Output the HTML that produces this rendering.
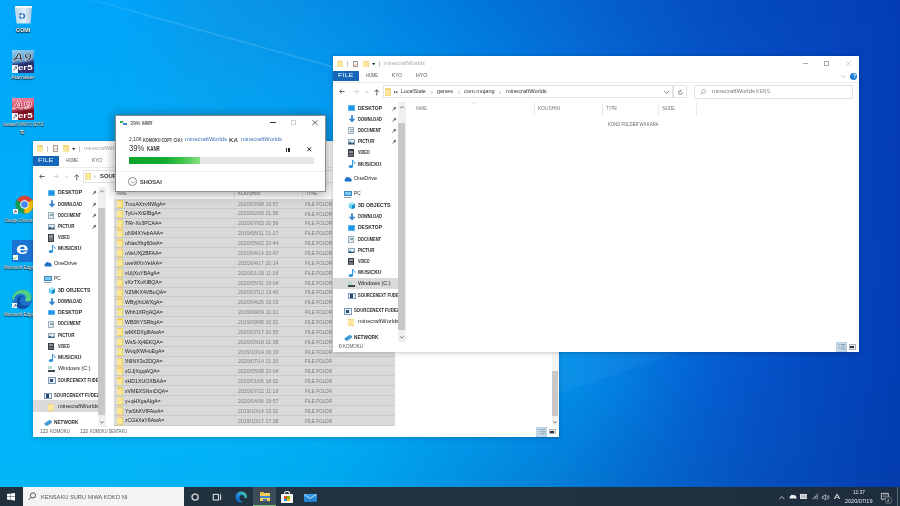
<!DOCTYPE html><html><head><meta charset="utf-8"><title>screen</title><style>
*{margin:0;padding:0;box-sizing:border-box}
html,body{width:900px;height:506px;overflow:hidden;background:#0a7fd8}
body{position:relative;font-family:"Liberation Sans",sans-serif}
.t{position:absolute;white-space:nowrap;line-height:1;transform-origin:0 50%}
.r{position:absolute}
.abs{position:absolute}
svg{position:absolute;overflow:visible}
</style></head><body><div class="abs" style="left:0;top:0;width:900px;height:506px;filter:blur(0.3px)">
<div class="abs" style="left:0;top:0;width:900px;height:506px;overflow:hidden"><div id="bgc" style="position:absolute;left:-50px;top:-44px;width:1000px;filter:blur(12px)"><div style="height:22px;background:linear-gradient(90deg,rgb(0,168,253) 0px,rgb(0,167,252) 25px,rgb(0,166,252) 50px,rgb(0,165,252) 75px,rgb(0,165,251) 100px,rgb(0,164,251) 125px,rgb(0,163,250) 150px,rgb(0,161,248) 175px,rgb(2,158,244) 200px,rgb(4,155,240) 225px,rgb(7,151,235) 250px,rgb(8,148,232) 275px,rgb(8,145,230) 300px,rgb(7,143,229) 325px,rgb(6,140,227) 350px,rgb(5,137,226) 375px,rgb(4,134,225) 400px,rgb(2,131,223) 425px,rgb(1,127,222) 450px,rgb(1,124,220) 475px,rgb(1,120,218) 500px,rgb(1,115,216) 525px,rgb(1,111,213) 550px,rgb(2,107,211) 575px,rgb(3,102,208) 600px,rgb(4,98,206) 625px,rgb(4,93,203) 650px,rgb(4,89,201) 675px,rgb(4,85,198) 700px,rgb(4,81,196) 725px,rgb(4,78,194) 750px,rgb(4,75,192) 775px,rgb(4,72,190) 800px,rgb(4,70,188) 825px,rgb(4,68,187) 850px,rgb(4,66,186) 875px,rgb(4,64,184) 900px,rgb(4,62,182) 925px,rgb(4,60,180) 950px,rgb(4,57,178) 975px,rgb(4,54,176) 1000px)"></div><div style="height:22px;background:linear-gradient(90deg,rgb(0,169,253) 0px,rgb(0,168,252) 25px,rgb(0,167,251) 50px,rgb(0,166,251) 75px,rgb(0,166,251) 100px,rgb(0,165,251) 125px,rgb(0,164,250) 150px,rgb(0,163,249) 175px,rgb(2,160,245) 200px,rgb(5,156,240) 225px,rgb(8,153,235) 250px,rgb(9,150,232) 275px,rgb(9,147,231) 300px,rgb(8,145,230) 325px,rgb(6,143,229) 350px,rgb(5,140,228) 375px,rgb(4,137,227) 400px,rgb(2,134,225) 425px,rgb(1,130,224) 450px,rgb(0,126,222) 475px,rgb(0,122,220) 500px,rgb(1,118,217) 525px,rgb(1,113,215) 550px,rgb(2,109,213) 575px,rgb(3,104,210) 600px,rgb(4,100,207) 625px,rgb(4,95,205) 650px,rgb(5,91,202) 675px,rgb(5,86,199) 700px,rgb(4,82,197) 725px,rgb(4,79,195) 750px,rgb(4,76,193) 775px,rgb(4,73,191) 800px,rgb(4,71,189) 825px,rgb(4,69,188) 850px,rgb(4,67,186) 875px,rgb(4,65,185) 900px,rgb(4,63,183) 925px,rgb(4,61,181) 950px,rgb(4,58,179) 975px,rgb(4,55,177) 1000px)"></div><div style="height:22px;background:linear-gradient(90deg,rgb(0,169,252) 0px,rgb(0,168,251) 25px,rgb(0,167,251) 50px,rgb(0,167,250) 75px,rgb(0,166,250) 100px,rgb(0,166,250) 125px,rgb(0,166,251) 150px,rgb(0,164,249) 175px,rgb(3,161,245) 200px,rgb(6,158,240) 225px,rgb(9,154,235) 250px,rgb(10,151,232) 275px,rgb(9,149,232) 300px,rgb(8,147,231) 325px,rgb(7,145,231) 350px,rgb(5,143,230) 375px,rgb(3,140,229) 400px,rgb(2,137,228) 425px,rgb(1,133,226) 450px,rgb(0,129,224) 475px,rgb(0,125,222) 500px,rgb(0,120,219) 525px,rgb(1,116,217) 550px,rgb(3,111,215) 575px,rgb(4,106,212) 600px,rgb(4,102,209) 625px,rgb(5,97,206) 650px,rgb(5,92,204) 675px,rgb(5,88,201) 700px,rgb(5,84,198) 725px,rgb(4,80,196) 750px,rgb(4,77,194) 775px,rgb(4,74,192) 800px,rgb(4,72,190) 825px,rgb(4,70,189) 850px,rgb(4,68,187) 875px,rgb(4,66,186) 900px,rgb(4,64,184) 925px,rgb(4,61,182) 950px,rgb(4,58,179) 975px,rgb(4,55,177) 1000px)"></div><div style="height:22px;background:linear-gradient(90deg,rgb(0,170,252) 0px,rgb(0,169,251) 25px,rgb(0,168,250) 50px,rgb(0,167,249) 75px,rgb(0,167,249) 100px,rgb(0,167,249) 125px,rgb(0,166,250) 150px,rgb(0,165,248) 175px,rgb(3,163,245) 200px,rgb(6,159,240) 225px,rgb(9,156,236) 250px,rgb(10,154,234) 275px,rgb(9,152,233) 300px,rgb(8,150,233) 325px,rgb(6,148,233) 350px,rgb(5,146,233) 375px,rgb(3,143,231) 400px,rgb(2,140,230) 425px,rgb(1,136,228) 450px,rgb(0,132,226) 475px,rgb(0,128,224) 500px,rgb(0,123,222) 525px,rgb(1,119,219) 550px,rgb(3,114,217) 575px,rgb(4,109,214) 600px,rgb(5,104,211) 625px,rgb(5,99,208) 650px,rgb(5,95,206) 675px,rgb(5,90,203) 700px,rgb(5,86,200) 725px,rgb(5,82,197) 750px,rgb(5,78,195) 775px,rgb(5,76,193) 800px,rgb(5,73,191) 825px,rgb(5,71,190) 850px,rgb(5,69,188) 875px,rgb(5,67,186) 900px,rgb(5,64,184) 925px,rgb(4,62,182) 950px,rgb(4,58,180) 975px,rgb(4,55,177) 1000px)"></div><div style="height:22px;background:linear-gradient(90deg,rgb(0,170,251) 0px,rgb(0,169,250) 25px,rgb(0,168,249) 50px,rgb(0,168,249) 75px,rgb(0,167,248) 100px,rgb(0,167,248) 125px,rgb(0,167,248) 150px,rgb(1,166,247) 175px,rgb(3,164,245) 200px,rgb(6,161,241) 225px,rgb(8,159,238) 250px,rgb(9,156,236) 275px,rgb(8,155,236) 300px,rgb(7,153,236) 325px,rgb(6,151,236) 350px,rgb(4,149,235) 375px,rgb(3,146,234) 400px,rgb(1,143,233) 425px,rgb(0,139,231) 450px,rgb(0,135,229) 475px,rgb(0,131,226) 500px,rgb(0,126,224) 525px,rgb(2,122,221) 550px,rgb(3,117,219) 575px,rgb(4,112,216) 600px,rgb(5,107,213) 625px,rgb(5,102,211) 650px,rgb(5,97,208) 675px,rgb(5,92,205) 700px,rgb(5,88,202) 725px,rgb(5,84,199) 750px,rgb(5,80,197) 775px,rgb(5,77,195) 800px,rgb(5,74,193) 825px,rgb(5,72,191) 850px,rgb(5,69,189) 875px,rgb(5,67,187) 900px,rgb(5,64,185) 925px,rgb(4,62,182) 950px,rgb(4,58,180) 975px,rgb(4,55,177) 1000px)"></div><div style="height:22px;background:linear-gradient(90deg,rgb(0,171,251) 0px,rgb(0,170,250) 25px,rgb(0,169,249) 50px,rgb(0,169,248) 75px,rgb(0,168,248) 100px,rgb(0,168,248) 125px,rgb(0,168,248) 150px,rgb(2,167,247) 175px,rgb(3,166,245) 200px,rgb(6,163,243) 225px,rgb(7,161,240) 250px,rgb(8,159,239) 275px,rgb(7,158,239) 300px,rgb(6,156,239) 325px,rgb(5,155,239) 350px,rgb(4,152,238) 375px,rgb(2,149,237) 400px,rgb(1,146,235) 425px,rgb(1,142,233) 450px,rgb(0,138,231) 475px,rgb(0,134,229) 500px,rgb(1,129,226) 525px,rgb(2,125,224) 550px,rgb(3,120,221) 575px,rgb(4,115,219) 600px,rgb(5,110,216) 625px,rgb(5,105,213) 650px,rgb(5,100,210) 675px,rgb(5,95,207) 700px,rgb(5,90,204) 725px,rgb(5,86,201) 750px,rgb(5,82,199) 775px,rgb(5,78,196) 800px,rgb(5,75,194) 825px,rgb(5,72,192) 850px,rgb(5,70,190) 875px,rgb(5,67,187) 900px,rgb(5,64,185) 925px,rgb(4,61,183) 950px,rgb(4,58,180) 975px,rgb(4,55,177) 1000px)"></div><div style="height:22px;background:linear-gradient(90deg,rgb(0,171,251) 0px,rgb(0,170,250) 25px,rgb(0,170,249) 50px,rgb(0,170,249) 75px,rgb(0,170,248) 100px,rgb(0,170,248) 125px,rgb(0,169,248) 150px,rgb(2,169,247) 175px,rgb(3,167,246) 200px,rgb(5,166,244) 225px,rgb(6,164,243) 250px,rgb(6,162,242) 275px,rgb(6,161,242) 300px,rgb(5,159,242) 325px,rgb(4,158,242) 350px,rgb(3,155,241) 375px,rgb(2,152,239) 400px,rgb(1,149,238) 425px,rgb(1,145,236) 450px,rgb(0,141,233) 475px,rgb(0,137,231) 500px,rgb(1,133,229) 525px,rgb(2,128,226) 550px,rgb(3,123,224) 575px,rgb(4,118,221) 600px,rgb(4,113,218) 625px,rgb(5,108,215) 650px,rgb(5,102,212) 675px,rgb(5,97,209) 700px,rgb(5,93,206) 725px,rgb(5,88,203) 750px,rgb(5,84,200) 775px,rgb(5,80,198) 800px,rgb(5,76,195) 825px,rgb(5,73,193) 850px,rgb(5,70,190) 875px,rgb(5,67,188) 900px,rgb(5,64,185) 925px,rgb(4,61,183) 950px,rgb(4,58,180) 975px,rgb(4,55,177) 1000px)"></div><div style="height:22px;background:linear-gradient(90deg,rgb(0,172,250) 0px,rgb(0,171,250) 25px,rgb(0,171,249) 50px,rgb(0,171,249) 75px,rgb(0,171,249) 100px,rgb(0,171,249) 125px,rgb(0,171,249) 150px,rgb(1,170,248) 175px,rgb(3,169,247) 200px,rgb(4,168,246) 225px,rgb(5,166,245) 250px,rgb(5,165,244) 275px,rgb(5,164,244) 300px,rgb(4,162,244) 325px,rgb(3,160,244) 350px,rgb(3,158,243) 375px,rgb(2,155,242) 400px,rgb(1,152,240) 425px,rgb(1,148,238) 450px,rgb(0,144,236) 475px,rgb(1,140,234) 500px,rgb(1,136,231) 525px,rgb(2,131,229) 550px,rgb(3,126,226) 575px,rgb(3,121,223) 600px,rgb(4,116,221) 625px,rgb(5,111,218) 650px,rgb(5,105,214) 675px,rgb(5,100,211) 700px,rgb(5,95,208) 725px,rgb(5,90,205) 750px,rgb(5,86,202) 775px,rgb(5,81,199) 800px,rgb(5,77,196) 825px,rgb(5,74,194) 850px,rgb(5,70,191) 875px,rgb(5,67,188) 900px,rgb(4,64,185) 925px,rgb(4,61,183) 950px,rgb(4,58,180) 975px,rgb(4,55,177) 1000px)"></div><div style="height:22px;background:linear-gradient(90deg,rgb(0,173,250) 0px,rgb(0,172,250) 25px,rgb(0,172,250) 50px,rgb(0,172,250) 75px,rgb(0,172,250) 100px,rgb(0,172,250) 125px,rgb(0,172,250) 150px,rgb(1,172,249) 175px,rgb(2,171,248) 200px,rgb(3,170,247) 225px,rgb(4,168,247) 250px,rgb(4,167,246) 275px,rgb(4,166,246) 300px,rgb(4,165,246) 325px,rgb(3,163,245) 350px,rgb(2,160,245) 375px,rgb(2,158,243) 400px,rgb(1,155,242) 425px,rgb(1,151,240) 450px,rgb(1,147,238) 475px,rgb(1,143,236) 500px,rgb(1,139,233) 525px,rgb(2,134,231) 550px,rgb(2,130,229) 575px,rgb(3,124,226) 600px,rgb(4,119,223) 625px,rgb(4,114,220) 650px,rgb(5,108,217) 675px,rgb(5,103,214) 700px,rgb(5,97,210) 725px,rgb(5,92,207) 750px,rgb(5,87,204) 775px,rgb(5,83,201) 800px,rgb(5,79,197) 825px,rgb(5,74,194) 850px,rgb(5,71,191) 875px,rgb(5,67,188) 900px,rgb(4,64,185) 925px,rgb(4,60,183) 950px,rgb(4,57,180) 975px,rgb(4,54,177) 1000px)"></div><div style="height:22px;background:linear-gradient(90deg,rgb(0,173,251) 0px,rgb(0,173,250) 25px,rgb(0,173,250) 50px,rgb(0,173,250) 75px,rgb(0,173,250) 100px,rgb(0,173,250) 125px,rgb(0,173,250) 150px,rgb(1,173,250) 175px,rgb(2,172,249) 200px,rgb(3,171,248) 225px,rgb(3,170,248) 250px,rgb(3,169,248) 275px,rgb(3,168,247) 300px,rgb(3,167,247) 325px,rgb(2,165,247) 350px,rgb(2,163,246) 375px,rgb(1,160,245) 400px,rgb(1,157,243) 425px,rgb(1,154,242) 450px,rgb(1,150,240) 475px,rgb(1,146,238) 500px,rgb(1,142,236) 525px,rgb(2,138,233) 550px,rgb(2,133,231) 575px,rgb(3,128,228) 600px,rgb(4,122,225) 625px,rgb(4,117,222) 650px,rgb(4,111,219) 675px,rgb(5,105,216) 700px,rgb(5,100,212) 725px,rgb(5,94,209) 750px,rgb(5,89,205) 775px,rgb(5,84,202) 800px,rgb(5,79,199) 825px,rgb(5,75,195) 850px,rgb(5,71,192) 875px,rgb(5,67,189) 900px,rgb(5,64,186) 925px,rgb(4,60,183) 950px,rgb(4,57,180) 975px,rgb(4,54,177) 1000px)"></div><div style="height:22px;background:linear-gradient(90deg,rgb(0,174,251) 0px,rgb(0,174,250) 25px,rgb(0,174,250) 50px,rgb(0,174,250) 75px,rgb(0,174,250) 100px,rgb(0,174,250) 125px,rgb(0,174,250) 150px,rgb(1,174,250) 175px,rgb(1,174,250) 200px,rgb(2,173,249) 225px,rgb(2,172,249) 250px,rgb(3,171,249) 275px,rgb(3,170,249) 300px,rgb(2,169,248) 325px,rgb(2,167,248) 350px,rgb(1,165,247) 375px,rgb(1,162,246) 400px,rgb(1,160,245) 425px,rgb(1,156,243) 450px,rgb(1,153,241) 475px,rgb(1,149,239) 500px,rgb(1,145,237) 525px,rgb(2,141,235) 550px,rgb(2,136,233) 575px,rgb(3,131,230) 600px,rgb(3,126,227) 625px,rgb(4,120,224) 650px,rgb(4,114,221) 675px,rgb(4,108,218) 700px,rgb(5,102,214) 725px,rgb(5,96,210) 750px,rgb(5,91,207) 775px,rgb(5,85,203) 800px,rgb(5,80,200) 825px,rgb(5,76,196) 850px,rgb(5,72,192) 875px,rgb(5,67,189) 900px,rgb(5,64,186) 925px,rgb(4,60,183) 950px,rgb(4,57,180) 975px,rgb(4,54,177) 1000px)"></div><div style="height:22px;background:linear-gradient(90deg,rgb(0,175,251) 0px,rgb(0,175,250) 25px,rgb(0,175,250) 50px,rgb(0,175,250) 75px,rgb(0,175,250) 100px,rgb(0,175,251) 125px,rgb(0,175,251) 150px,rgb(1,175,251) 175px,rgb(1,175,250) 200px,rgb(2,174,250) 225px,rgb(2,174,250) 250px,rgb(2,173,250) 275px,rgb(2,172,249) 300px,rgb(2,170,249) 325px,rgb(1,169,249) 350px,rgb(1,167,248) 375px,rgb(1,164,247) 400px,rgb(1,162,246) 425px,rgb(1,159,244) 450px,rgb(1,155,243) 475px,rgb(1,152,241) 500px,rgb(1,148,239) 525px,rgb(2,144,237) 550px,rgb(2,139,235) 575px,rgb(3,134,232) 600px,rgb(3,129,229) 625px,rgb(4,123,226) 650px,rgb(4,117,223) 675px,rgb(4,110,219) 700px,rgb(5,104,216) 725px,rgb(5,98,212) 750px,rgb(5,92,208) 775px,rgb(5,86,204) 800px,rgb(5,81,200) 825px,rgb(5,76,197) 850px,rgb(5,72,193) 875px,rgb(5,68,189) 900px,rgb(5,64,186) 925px,rgb(4,61,183) 950px,rgb(4,57,180) 975px,rgb(4,54,177) 1000px)"></div><div style="height:22px;background:linear-gradient(90deg,rgb(0,176,251) 0px,rgb(0,176,251) 25px,rgb(0,176,250) 50px,rgb(0,176,250) 75px,rgb(0,176,251) 100px,rgb(0,176,251) 125px,rgb(0,176,251) 150px,rgb(1,176,251) 175px,rgb(1,176,251) 200px,rgb(1,176,251) 225px,rgb(1,175,250) 250px,rgb(2,174,250) 275px,rgb(2,173,250) 300px,rgb(1,172,250) 325px,rgb(1,170,249) 350px,rgb(1,168,248) 375px,rgb(1,166,248) 400px,rgb(0,164,246) 425px,rgb(0,161,245) 450px,rgb(1,158,244) 475px,rgb(1,154,242) 500px,rgb(1,150,240) 525px,rgb(1,146,238) 550px,rgb(2,142,236) 575px,rgb(2,137,234) 600px,rgb(3,131,231) 625px,rgb(3,125,228) 650px,rgb(4,119,225) 675px,rgb(4,112,221) 700px,rgb(4,106,217) 725px,rgb(5,99,213) 750px,rgb(5,93,209) 775px,rgb(5,87,205) 800px,rgb(5,82,201) 825px,rgb(5,77,197) 850px,rgb(5,72,193) 875px,rgb(5,68,190) 900px,rgb(5,64,186) 925px,rgb(4,61,183) 950px,rgb(4,57,179) 975px,rgb(4,54,176) 1000px)"></div><div style="height:22px;background:linear-gradient(90deg,rgb(0,177,251) 0px,rgb(0,177,251) 25px,rgb(0,177,250) 50px,rgb(0,177,250) 75px,rgb(0,177,251) 100px,rgb(0,177,251) 125px,rgb(0,177,251) 150px,rgb(0,177,251) 175px,rgb(1,177,251) 200px,rgb(1,177,251) 225px,rgb(1,176,251) 250px,rgb(1,175,251) 275px,rgb(1,174,250) 300px,rgb(1,173,250) 325px,rgb(1,172,249) 350px,rgb(1,170,249) 375px,rgb(0,168,248) 400px,rgb(0,165,247) 425px,rgb(0,163,246) 450px,rgb(0,160,244) 475px,rgb(1,156,243) 500px,rgb(1,153,241) 525px,rgb(1,149,240) 550px,rgb(2,144,238) 575px,rgb(2,140,235) 600px,rgb(3,134,233) 625px,rgb(3,128,230) 650px,rgb(4,121,226) 675px,rgb(4,114,222) 700px,rgb(4,107,218) 725px,rgb(5,100,214) 750px,rgb(5,94,210) 775px,rgb(5,88,206) 800px,rgb(5,82,202) 825px,rgb(5,77,197) 850px,rgb(5,73,193) 875px,rgb(5,69,190) 900px,rgb(5,65,186) 925px,rgb(4,61,183) 950px,rgb(4,58,179) 975px,rgb(4,54,176) 1000px)"></div><div style="height:22px;background:linear-gradient(90deg,rgb(0,178,251) 0px,rgb(0,178,250) 25px,rgb(0,177,250) 50px,rgb(0,177,250) 75px,rgb(0,177,250) 100px,rgb(0,178,251) 125px,rgb(0,178,251) 150px,rgb(0,178,251) 175px,rgb(1,178,251) 200px,rgb(1,177,251) 225px,rgb(1,177,251) 250px,rgb(1,176,251) 275px,rgb(1,175,250) 300px,rgb(1,174,250) 325px,rgb(1,173,250) 350px,rgb(0,171,249) 375px,rgb(0,169,248) 400px,rgb(0,167,247) 425px,rgb(0,164,246) 450px,rgb(0,161,245) 475px,rgb(1,158,243) 500px,rgb(1,154,242) 525px,rgb(1,151,240) 550px,rgb(2,147,238) 575px,rgb(2,142,236) 600px,rgb(3,136,234) 625px,rgb(3,130,231) 650px,rgb(3,123,227) 675px,rgb(4,116,223) 700px,rgb(4,108,219) 725px,rgb(4,101,215) 750px,rgb(5,94,210) 775px,rgb(5,88,206) 800px,rgb(5,82,202) 825px,rgb(5,77,198) 850px,rgb(5,73,193) 875px,rgb(5,69,190) 900px,rgb(5,65,186) 925px,rgb(4,61,182) 950px,rgb(4,58,179) 975px,rgb(4,54,176) 1000px)"></div><div style="height:22px;background:linear-gradient(90deg,rgb(0,179,251) 0px,rgb(0,178,250) 25px,rgb(0,178,250) 50px,rgb(0,178,250) 75px,rgb(0,178,250) 100px,rgb(0,178,250) 125px,rgb(0,178,251) 150px,rgb(0,178,251) 175px,rgb(1,178,251) 200px,rgb(1,178,251) 225px,rgb(1,178,251) 250px,rgb(1,177,251) 275px,rgb(1,176,250) 300px,rgb(1,175,250) 325px,rgb(0,174,249) 350px,rgb(0,172,249) 375px,rgb(0,170,248) 400px,rgb(0,168,247) 425px,rgb(0,165,246) 450px,rgb(0,162,245) 475px,rgb(0,159,243) 500px,rgb(1,156,242) 525px,rgb(1,152,241) 550px,rgb(2,148,239) 575px,rgb(2,144,237) 600px,rgb(2,138,234) 625px,rgb(3,132,231) 650px,rgb(3,125,228) 675px,rgb(4,117,224) 700px,rgb(4,109,219) 725px,rgb(4,101,215) 750px,rgb(5,94,210) 775px,rgb(5,88,206) 800px,rgb(5,82,202) 825px,rgb(5,77,197) 850px,rgb(5,73,193) 875px,rgb(4,69,189) 900px,rgb(4,65,185) 925px,rgb(4,61,182) 950px,rgb(4,58,178) 975px,rgb(3,54,175) 1000px)"></div><div style="height:22px;background:linear-gradient(90deg,rgb(0,179,250) 0px,rgb(0,179,250) 25px,rgb(0,179,250) 50px,rgb(0,179,250) 75px,rgb(0,179,250) 100px,rgb(0,179,250) 125px,rgb(0,179,250) 150px,rgb(1,179,251) 175px,rgb(1,179,251) 200px,rgb(1,179,251) 225px,rgb(1,178,251) 250px,rgb(1,178,250) 275px,rgb(1,177,250) 300px,rgb(0,176,250) 325px,rgb(0,174,249) 350px,rgb(0,173,248) 375px,rgb(0,171,247) 400px,rgb(0,168,246) 425px,rgb(0,166,245) 450px,rgb(0,163,244) 475px,rgb(0,160,243) 500px,rgb(1,156,242) 525px,rgb(1,153,240) 550px,rgb(1,149,239) 575px,rgb(2,145,237) 600px,rgb(2,140,235) 625px,rgb(3,133,231) 650px,rgb(3,126,228) 675px,rgb(4,117,224) 700px,rgb(4,109,219) 725px,rgb(4,101,215) 750px,rgb(5,94,210) 775px,rgb(5,87,206) 800px,rgb(5,82,201) 825px,rgb(5,77,197) 850px,rgb(4,73,193) 875px,rgb(4,69,189) 900px,rgb(4,65,185) 925px,rgb(4,61,181) 950px,rgb(3,58,178) 975px,rgb(3,54,174) 1000px)"></div><div style="height:22px;background:linear-gradient(90deg,rgb(0,180,250) 0px,rgb(0,180,250) 25px,rgb(0,179,250) 50px,rgb(0,179,250) 75px,rgb(0,179,250) 100px,rgb(0,179,250) 125px,rgb(0,179,250) 150px,rgb(1,179,250) 175px,rgb(1,179,250) 200px,rgb(1,179,250) 225px,rgb(1,179,250) 250px,rgb(1,178,250) 275px,rgb(1,177,250) 300px,rgb(0,176,249) 325px,rgb(0,175,248) 350px,rgb(0,173,248) 375px,rgb(0,171,247) 400px,rgb(0,168,246) 425px,rgb(0,166,245) 450px,rgb(0,163,243) 475px,rgb(0,160,242) 500px,rgb(1,156,241) 525px,rgb(1,153,240) 550px,rgb(1,150,238) 575px,rgb(2,146,236) 600px,rgb(2,141,234) 625px,rgb(3,134,231) 650px,rgb(3,126,227) 675px,rgb(4,117,223) 700px,rgb(4,108,218) 725px,rgb(4,100,214) 750px,rgb(5,93,209) 775px,rgb(5,87,205) 800px,rgb(5,81,200) 825px,rgb(5,77,196) 850px,rgb(4,73,192) 875px,rgb(4,69,188) 900px,rgb(4,65,184) 925px,rgb(3,61,181) 950px,rgb(3,58,177) 975px,rgb(3,54,174) 1000px)"></div><div style="height:22px;background:linear-gradient(90deg,rgb(0,181,250) 0px,rgb(0,180,250) 25px,rgb(0,180,249) 50px,rgb(0,180,249) 75px,rgb(0,180,249) 100px,rgb(0,180,250) 125px,rgb(1,180,250) 150px,rgb(1,180,250) 175px,rgb(1,180,250) 200px,rgb(1,179,250) 225px,rgb(1,179,250) 250px,rgb(1,179,249) 275px,rgb(1,178,249) 300px,rgb(0,177,248) 325px,rgb(0,175,247) 350px,rgb(0,173,247) 375px,rgb(0,171,246) 400px,rgb(0,168,245) 425px,rgb(0,165,243) 450px,rgb(0,162,242) 475px,rgb(0,159,241) 500px,rgb(1,156,239) 525px,rgb(1,152,238) 550px,rgb(1,149,237) 575px,rgb(2,145,235) 600px,rgb(2,141,233) 625px,rgb(3,134,230) 650px,rgb(3,126,226) 675px,rgb(4,116,221) 700px,rgb(4,107,217) 725px,rgb(4,98,212) 750px,rgb(5,91,208) 775px,rgb(5,86,203) 800px,rgb(5,81,199) 825px,rgb(4,76,195) 850px,rgb(4,72,191) 875px,rgb(4,69,187) 900px,rgb(3,65,183) 925px,rgb(3,62,180) 950px,rgb(3,58,176) 975px,rgb(2,54,173) 1000px)"></div><div style="height:22px;background:linear-gradient(90deg,rgb(0,181,250) 0px,rgb(0,181,250) 25px,rgb(0,180,249) 50px,rgb(0,180,249) 75px,rgb(0,180,249) 100px,rgb(1,180,249) 125px,rgb(1,180,249) 150px,rgb(1,180,249) 175px,rgb(1,180,249) 200px,rgb(1,180,249) 225px,rgb(1,179,249) 250px,rgb(1,179,249) 275px,rgb(1,178,248) 300px,rgb(0,177,247) 325px,rgb(0,175,246) 350px,rgb(0,173,245) 375px,rgb(0,171,244) 400px,rgb(0,168,243) 425px,rgb(0,164,242) 450px,rgb(0,161,241) 475px,rgb(0,157,239) 500px,rgb(1,154,238) 525px,rgb(1,151,236) 550px,rgb(2,147,234) 575px,rgb(2,143,232) 600px,rgb(2,139,230) 625px,rgb(3,132,227) 650px,rgb(3,124,223) 675px,rgb(4,114,218) 700px,rgb(4,105,214) 725px,rgb(4,97,210) 750px,rgb(5,90,206) 775px,rgb(5,85,201) 800px,rgb(5,80,197) 825px,rgb(4,76,193) 850px,rgb(4,72,189) 875px,rgb(3,69,186) 900px,rgb(3,65,182) 925px,rgb(3,61,179) 950px,rgb(2,58,175) 975px,rgb(2,54,172) 1000px)"></div><div style="height:22px;background:linear-gradient(90deg,rgb(0,182,250) 0px,rgb(0,181,249) 25px,rgb(0,181,249) 50px,rgb(1,181,249) 75px,rgb(1,180,249) 100px,rgb(1,180,249) 125px,rgb(2,180,249) 150px,rgb(2,180,249) 175px,rgb(2,180,249) 200px,rgb(2,179,249) 225px,rgb(2,179,248) 250px,rgb(1,178,248) 275px,rgb(1,178,247) 300px,rgb(0,176,246) 325px,rgb(0,175,245) 350px,rgb(0,173,244) 375px,rgb(0,170,243) 400px,rgb(0,167,242) 425px,rgb(0,163,240) 450px,rgb(0,159,239) 475px,rgb(1,155,237) 500px,rgb(1,152,235) 525px,rgb(1,148,233) 550px,rgb(2,144,231) 575px,rgb(2,140,229) 600px,rgb(2,135,226) 625px,rgb(3,129,223) 650px,rgb(3,120,219) 675px,rgb(4,112,215) 700px,rgb(4,103,211) 725px,rgb(4,95,207) 750px,rgb(5,89,203) 775px,rgb(5,84,199) 800px,rgb(5,80,195) 825px,rgb(4,76,191) 850px,rgb(4,72,188) 875px,rgb(3,68,184) 900px,rgb(3,65,181) 925px,rgb(2,61,177) 950px,rgb(2,58,174) 975px,rgb(2,54,171) 1000px)"></div><div style="height:22px;background:linear-gradient(90deg,rgb(0,182,249) 0px,rgb(0,182,249) 25px,rgb(1,181,249) 50px,rgb(1,181,249) 75px,rgb(1,181,248) 100px,rgb(2,181,248) 125px,rgb(2,180,248) 150px,rgb(2,180,248) 175px,rgb(2,180,248) 200px,rgb(2,179,248) 225px,rgb(2,179,248) 250px,rgb(2,178,247) 275px,rgb(1,177,246) 300px,rgb(0,176,245) 325px,rgb(0,174,244) 350px,rgb(0,172,243) 375px,rgb(0,169,241) 400px,rgb(0,166,240) 425px,rgb(0,162,238) 450px,rgb(0,157,236) 475px,rgb(1,153,235) 500px,rgb(1,149,233) 525px,rgb(1,145,230) 550px,rgb(2,141,228) 575px,rgb(2,136,225) 600px,rgb(3,131,222) 625px,rgb(3,124,219) 650px,rgb(3,117,215) 675px,rgb(4,109,211) 700px,rgb(4,101,208) 725px,rgb(4,94,204) 750px,rgb(5,88,200) 775px,rgb(5,83,197) 800px,rgb(5,79,193) 825px,rgb(5,75,189) 850px,rgb(4,72,186) 875px,rgb(3,68,183) 900px,rgb(3,65,179) 925px,rgb(2,61,176) 950px,rgb(2,58,173) 975px,rgb(2,54,170) 1000px)"></div><div style="height:22px;background:linear-gradient(90deg,rgb(1,183,249) 0px,rgb(1,182,249) 25px,rgb(1,182,248) 50px,rgb(2,181,248) 75px,rgb(2,181,248) 100px,rgb(2,181,248) 125px,rgb(2,180,248) 150px,rgb(3,180,248) 175px,rgb(3,179,247) 200px,rgb(3,179,247) 225px,rgb(2,178,247) 250px,rgb(2,177,246) 275px,rgb(1,176,245) 300px,rgb(1,175,244) 325px,rgb(0,173,242) 350px,rgb(0,171,241) 375px,rgb(0,168,239) 400px,rgb(0,164,238) 425px,rgb(0,160,236) 450px,rgb(0,155,234) 475px,rgb(1,150,232) 500px,rgb(1,146,230) 525px,rgb(2,142,227) 550px,rgb(2,137,225) 575px,rgb(2,133,222) 600px,rgb(3,127,218) 625px,rgb(3,120,214) 650px,rgb(3,113,210) 675px,rgb(4,106,207) 700px,rgb(4,99,204) 725px,rgb(5,93,201) 750px,rgb(5,88,198) 775px,rgb(5,83,194) 800px,rgb(5,79,191) 825px,rgb(5,75,187) 850px,rgb(4,71,184) 875px,rgb(3,68,181) 900px,rgb(3,64,178) 925px,rgb(2,61,175) 950px,rgb(2,57,171) 975px,rgb(2,54,168) 1000px)"></div><div style="height:22px;background:linear-gradient(90deg,rgb(1,183,249) 0px,rgb(1,183,248) 25px,rgb(2,182,248) 50px,rgb(2,182,248) 75px,rgb(2,181,247) 100px,rgb(3,181,247) 125px,rgb(3,180,247) 150px,rgb(3,180,247) 175px,rgb(3,179,246) 200px,rgb(3,178,246) 225px,rgb(3,178,245) 250px,rgb(2,177,245) 275px,rgb(1,175,243) 300px,rgb(1,174,242) 325px,rgb(0,172,241) 350px,rgb(0,170,239) 375px,rgb(0,166,237) 400px,rgb(0,162,236) 425px,rgb(0,158,234) 450px,rgb(1,153,232) 475px,rgb(1,148,229) 500px,rgb(2,143,227) 525px,rgb(2,138,224) 550px,rgb(2,134,221) 575px,rgb(3,129,218) 600px,rgb(3,123,215) 625px,rgb(3,117,211) 650px,rgb(4,110,207) 675px,rgb(4,104,204) 700px,rgb(4,98,201) 725px,rgb(5,92,198) 750px,rgb(5,87,195) 775px,rgb(5,82,192) 800px,rgb(5,78,189) 825px,rgb(4,74,185) 850px,rgb(4,71,182) 875px,rgb(4,67,179) 900px,rgb(3,64,176) 925px,rgb(3,60,173) 950px,rgb(2,57,170) 975px,rgb(2,53,167) 1000px)"></div><div style="height:22px;background:linear-gradient(90deg,rgb(1,184,248) 0px,rgb(2,183,248) 25px,rgb(2,182,247) 50px,rgb(2,182,247) 75px,rgb(3,181,247) 100px,rgb(3,180,246) 125px,rgb(3,180,246) 150px,rgb(3,179,246) 175px,rgb(3,178,245) 200px,rgb(3,178,245) 225px,rgb(3,177,244) 250px,rgb(2,176,243) 275px,rgb(2,174,242) 300px,rgb(1,173,240) 325px,rgb(1,171,239) 350px,rgb(0,168,237) 375px,rgb(0,164,235) 400px,rgb(0,160,233) 425px,rgb(0,156,231) 450px,rgb(1,151,229) 475px,rgb(1,145,227) 500px,rgb(2,140,224) 525px,rgb(2,136,221) 550px,rgb(2,131,218) 575px,rgb(3,126,215) 600px,rgb(3,120,211) 625px,rgb(3,114,208) 650px,rgb(4,108,204) 675px,rgb(4,102,201) 700px,rgb(4,96,198) 725px,rgb(4,91,195) 750px,rgb(5,86,192) 775px,rgb(5,82,189) 800px,rgb(5,78,186) 825px,rgb(4,74,183) 850px,rgb(4,70,180) 875px,rgb(4,67,177) 900px,rgb(3,63,174) 925px,rgb(3,60,171) 950px,rgb(2,56,169) 975px,rgb(2,53,166) 1000px)"></div><div style="height:22px;background:linear-gradient(90deg,rgb(2,184,248) 0px,rgb(2,183,247) 25px,rgb(2,182,247) 50px,rgb(3,182,246) 75px,rgb(3,181,246) 100px,rgb(3,180,246) 125px,rgb(3,180,245) 150px,rgb(3,179,245) 175px,rgb(3,178,244) 200px,rgb(3,177,243) 225px,rgb(3,176,243) 250px,rgb(2,174,242) 275px,rgb(2,173,240) 300px,rgb(1,171,239) 325px,rgb(1,169,237) 350px,rgb(1,166,235) 375px,rgb(0,162,233) 400px,rgb(1,158,231) 425px,rgb(1,153,229) 450px,rgb(1,149,227) 475px,rgb(2,143,224) 500px,rgb(2,138,221) 525px,rgb(2,133,219) 550px,rgb(3,128,215) 575px,rgb(3,123,212) 600px,rgb(3,118,208) 625px,rgb(3,112,205) 650px,rgb(4,106,201) 675px,rgb(4,101,198) 700px,rgb(4,95,195) 725px,rgb(4,90,193) 750px,rgb(5,85,190) 775px,rgb(5,81,187) 800px,rgb(5,77,184) 825px,rgb(4,73,181) 850px,rgb(4,70,178) 875px,rgb(4,66,176) 900px,rgb(3,63,173) 925px,rgb(3,59,170) 950px,rgb(2,56,167) 975px,rgb(2,53,164) 1000px)"></div><div style="height:22px;background:linear-gradient(90deg,rgb(2,184,247) 0px,rgb(2,183,247) 25px,rgb(3,182,246) 50px,rgb(3,182,246) 75px,rgb(3,181,245) 100px,rgb(3,180,245) 125px,rgb(3,179,244) 150px,rgb(4,178,243) 175px,rgb(3,177,243) 200px,rgb(3,176,242) 225px,rgb(3,175,241) 250px,rgb(3,173,240) 275px,rgb(2,171,239) 300px,rgb(2,169,237) 325px,rgb(1,167,235) 350px,rgb(1,164,233) 375px,rgb(1,160,231) 400px,rgb(1,156,229) 425px,rgb(1,151,227) 450px,rgb(1,147,224) 475px,rgb(2,141,222) 500px,rgb(2,136,219) 525px,rgb(2,131,216) 550px,rgb(3,126,213) 575px,rgb(3,121,209) 600px,rgb(3,116,206) 625px,rgb(4,110,203) 650px,rgb(4,105,199) 675px,rgb(4,99,196) 700px,rgb(4,94,193) 725px,rgb(4,89,190) 750px,rgb(5,85,188) 775px,rgb(5,81,185) 800px,rgb(4,77,182) 825px,rgb(4,73,179) 850px,rgb(4,69,177) 875px,rgb(4,66,174) 900px,rgb(3,62,171) 925px,rgb(3,59,168) 950px,rgb(3,55,166) 975px,rgb(2,52,163) 1000px)"></div><div style="height:22px;background:linear-gradient(90deg,rgb(2,184,246) 0px,rgb(3,183,246) 25px,rgb(3,182,245) 50px,rgb(3,181,245) 75px,rgb(3,180,244) 100px,rgb(3,179,244) 125px,rgb(4,178,243) 150px,rgb(4,177,242) 175px,rgb(4,176,241) 200px,rgb(3,175,241) 225px,rgb(3,173,239) 250px,rgb(3,172,238) 275px,rgb(2,170,237) 300px,rgb(2,168,235) 325px,rgb(2,165,233) 350px,rgb(1,162,231) 375px,rgb(1,158,229) 400px,rgb(1,154,227) 425px,rgb(1,149,225) 450px,rgb(2,145,222) 475px,rgb(2,140,219) 500px,rgb(2,135,217) 525px,rgb(3,130,213) 550px,rgb(3,124,210) 575px,rgb(3,119,207) 600px,rgb(3,114,204) 625px,rgb(4,109,200) 650px,rgb(4,103,197) 675px,rgb(4,98,194) 700px,rgb(4,93,191) 725px,rgb(4,89,188) 750px,rgb(4,84,186) 775px,rgb(4,80,183) 800px,rgb(4,76,180) 825px,rgb(4,72,178) 850px,rgb(4,69,175) 875px,rgb(4,65,172) 900px,rgb(3,62,170) 925px,rgb(3,58,167) 950px,rgb(3,55,164) 975px,rgb(2,52,162) 1000px)"></div></div>
<div class="abs" style="left:0;top:0;width:900px;height:506px;background:linear-gradient(164.4deg,rgba(255,255,255,0) 0,rgba(255,255,255,0) 0)"></div>
<svg style="left:0.00px;top:0.00px" width="900" height="506" viewBox="0 0 900 506"><defs><linearGradient id="lb" x1="0" y1="0" x2="1" y2="0"><stop offset="0" stop-color="#fff" stop-opacity="0"/><stop offset="0.25" stop-color="#fff" stop-opacity="0.10"/><stop offset="1" stop-color="#fff" stop-opacity="0.14"/></linearGradient></defs><path d="M60 -9 L333 67" stroke="url(#lb)" stroke-width="1.6" fill="none"/><path d="M540 353 L690 353 L690 349 L540 400 Z" fill="#ffffff" fill-opacity="0.04"/></svg>
</div>
<div class="r" style="left:14.50px;top:5.50px;width:17.50px;height:18.00px;background:linear-gradient(90deg,rgba(205,220,232,.9),rgba(240,245,250,.92) 55%,rgba(190,205,218,.9));clip-path:polygon(0 4%,100% 0,92% 100%,12% 100%)"></div>
<div class="r" style="left:14.80px;top:5.50px;width:17.00px;height:2.20px;background:rgba(250,252,255,.9);border-radius:1px"></div>
<svg style="left:17.80px;top:11.50px" width="8" height="8" viewBox="0 0 8 8"><circle cx="4" cy="4" r="2.5" stroke="#2a70c4" stroke-width="1.5" fill="none" stroke-dasharray="3 1.2"/></svg>
<div class="t" style="left:16.30px;top:28.09px;font-size:5.20px;color:#fff;font-weight:bold;transform:scaleX(1.0313);text-shadow:0 0 1px rgba(0,0,0,.9),0 0.5px 1px #000">GOMI</div>
<div class="r" style="left:12.00px;top:50.00px;width:22.00px;height:22.60px;background:linear-gradient(170deg,#8fd0f4 0%,#5a9ad0 45%,#24306e 60%,#3a2c70 100%);"></div>
<div class="t" style="left:13.20px;top:51.78px;font-size:11.50px;color:#2c3444;font-weight:bold;transform:scaleX(1.2584);font-style:italic;-webkit-text-stroke:0.4px #e8f0f8">A9</div>
<div class="t" style="left:17.50px;top:64.30px;font-size:7.00px;color:#fff;font-weight:bold;transform:scaleX(1.3796);">er5</div>
<div class="r" style="left:12.00px;top:64.60px;width:5.50px;height:8.00px;background:#f0f4f8;"></div><svg style="left:12.80px;top:66.00px" width="4" height="5" viewBox="0 0 4 5"><path d="M0.5 4.5L3.2 1.2M1.8 0.8H3.5V2.5" stroke="#335" fill="none" stroke-width="0.7"/></svg>
<div class="t" style="left:11.40px;top:75.03px;font-size:5.40px;color:#fff;transform:scaleX(1.0212);text-shadow:0 0 1px rgba(0,0,0,.9),0 0.5px 1px #000">Atamaker</div>
<div class="r" style="left:12.00px;top:98.00px;width:21.70px;height:21.80px;background:linear-gradient(170deg,#f08aa0 0%,#d0506a 45%,#7a0f22 60%,#8c1c2c 100%);"></div>
<div class="t" style="left:13.20px;top:99.78px;font-size:11.50px;color:#c83350;font-weight:bold;transform:scaleX(1.2584);font-style:italic;-webkit-text-stroke:0.5px #fff">A9</div>
<div class="t" style="left:17.50px;top:112.30px;font-size:7.00px;color:#fff;font-weight:bold;transform:scaleX(1.3796);">er5</div>
<div class="r" style="left:12.00px;top:112.60px;width:5.50px;height:7.20px;background:#f0f4f8;"></div><svg style="left:12.80px;top:113.80px" width="4" height="5" viewBox="0 0 4 5"><path d="M0.5 4.5L3.2 1.2M1.8 0.8H3.5V2.5" stroke="#335" fill="none" stroke-width="0.7"/></svg>
<div class="t" style="left:3.30px;top:122.23px;font-size:5.40px;color:#fff;transform:scaleX(0.5771);text-shadow:0 0 1px rgba(0,0,0,.9),0 0.5px 1px #000">Atamaker5 KANKYO SETTEI</div>
<div class="t" style="left:20.00px;top:129.99px;font-size:5.20px;color:#fff;font-weight:bold;transform:scaleX(0.6772);text-shadow:0 0 1px rgba(0,0,0,.9),0 0.5px 1px #000">TE</div>
<svg style="left:14.50px;top:195.00px" width="19" height="19" viewBox="0 0 19 19"><circle cx="9.5" cy="9.5" r="9" fill="#db4437"/><path d="M9.5 9.5L1.7 5A9 9 0 0 0 9.5 18.5Z" fill="#0f9d58"/><path d="M9.5 9.5L17.3 5A9 9 0 0 1 9.5 18.5Z" fill="#f4c20d"/><circle cx="9.5" cy="9.5" r="4.3" fill="#fff"/><circle cx="9.5" cy="9.5" r="3.3" fill="#4285f4"/></svg>
<div class="r" style="left:12.50px;top:209.00px;width:5.00px;height:5.00px;background:#fff;"></div><svg style="left:13.00px;top:209.50px" width="4" height="4" viewBox="0 0 4 4"><path d="M0.5 3.5L3 1M1.5 0.8H3.2V2.5" stroke="#335" fill="none" stroke-width="0.7"/></svg>
<div class="t" style="left:5.00px;top:217.63px;font-size:5.40px;color:#fff;transform:scaleX(0.7345);text-shadow:0 0 1px rgba(0,0,0,.9),0 0.5px 1px #000">Google Chrome</div>
<div class="r" style="left:12.00px;top:240.00px;width:21.00px;height:21.60px;background:#1b74d4;"></div>
<div class="t" style="left:16.00px;top:240.34px;font-size:17.00px;color:#fff;font-weight:bold;transform:scaleX(1.3221);">e</div>
<div class="r" style="left:12.50px;top:255.00px;width:5.00px;height:5.00px;background:#fff;"></div><svg style="left:13.00px;top:255.50px" width="4" height="4" viewBox="0 0 4 4"><path d="M0.5 2L1.5 3.2L3.5 0.8" stroke="#3a3" fill="none" stroke-width="0.7"/></svg>
<div class="t" style="left:3.50px;top:264.53px;font-size:5.40px;color:#fff;transform:scaleX(0.8330);text-shadow:0 0 1px rgba(0,0,0,.9),0 0.5px 1px #000">Microsoft Edge</div>
<svg style="left:11.00px;top:289.00px" width="22" height="21" viewBox="0 0 22 21"><circle cx="11" cy="10.5" r="10" fill="#1b6fcf"/><path d="M1.5 8C3 2 9 0 14 1C19 2 22 7 20 11C19 13 15 13 14 11C17 7 12 4 8 5C4 6 3 9 3 13C2 11 1.3 9.5 1.5 8Z" fill="#4fd18a"/><path d="M6 12C6 8 9.5 6 12.5 7.5C9 8 8 11 9.5 14C11 17 15.5 17.5 19 16C16 20 10 21 6.5 18C5.5 16 6 14 6 12Z" fill="#0e4e9e"/></svg>
<div class="r" style="left:12.00px;top:303.00px;width:5.00px;height:5.00px;background:#fff;"></div><svg style="left:12.50px;top:303.50px" width="4" height="4" viewBox="0 0 4 4"><path d="M0.5 3.5L3 1M1.5 0.8H3.2V2.5" stroke="#335" fill="none" stroke-width="0.7"/></svg>
<div class="t" style="left:3.50px;top:312.03px;font-size:5.40px;color:#fff;transform:scaleX(0.8330);text-shadow:0 0 1px rgba(0,0,0,.9),0 0.5px 1px #000">Microsoft Edge</div>
<div class="abs" style="left:32.7px;top:140.8px;width:526.3px;height:296.3px;background:#fff;box-shadow:0 0 1.5px 0.3px rgba(0,10,40,.55),0 1px 5px rgba(0,0,0,.2);overflow:hidden"><div class="r" style="left:4.00px;top:4.60px;width:6.60px;height:6.80px;background:#f1d577;border-radius:0.4px"></div><div class="r" style="left:4.60px;top:5.80px;width:5.40px;height:5.00px;background:#fbe7a2;"></div><div class="r" style="left:14.00px;top:5.00px;width:0.60px;height:6.00px;background:#c8c8c8;"></div><div class="r" style="left:20.20px;top:4.60px;width:5.60px;height:6.80px;background:#faf7f2;border:0.6px solid #a09a95"></div><svg style="left:21.20px;top:6.50px" width="4" height="3" viewBox="0 0 4 3"><path d="M0.3 1.5L1.5 2.6L3.6 0.3" stroke="#d07a4a" fill="none" stroke-width="0.6"/></svg><div class="r" style="left:30.00px;top:4.60px;width:6.40px;height:6.80px;background:#f1d577;border-radius:0.4px"></div><div class="r" style="left:30.60px;top:5.80px;width:5.20px;height:5.00px;background:#fbe7a2;"></div><svg style="left:39.60px;top:7.00px" width="3.4" height="2.2" viewBox="0 0 3.4 2.2"><path d="M0 0H3.4L1.7 2.2Z" fill="#333"/></svg><div class="r" style="left:46.80px;top:5.00px;width:0.60px;height:6.00px;background:#c8c8c8;"></div><div class="t" style="left:51.00px;top:4.92px;font-size:5.60px;color:#a8a8a8;transform:scaleX(1.0160);">minecraftWorlds</div><div class="r" style="left:470.00px;top:7.10px;width:5.20px;height:0.50px;background:#aaa;"></div><div class="r" style="left:491.00px;top:4.70px;width:5.30px;height:5.30px;background:transparent;border:0.5px solid #aaa"></div><svg style="left:513.00px;top:5.20px" width="5" height="5" viewBox="0 0 5 5"><path d="M0.2 0.2L4.8 4.8M4.8 0.2L0.2 4.8" stroke="#aaa" stroke-width="0.55"/></svg><div class="r" style="left:0.00px;top:14.80px;width:26.00px;height:10.40px;background:#1565b8;"></div><div class="t" style="left:5.00px;top:17.30px;font-size:5.60px;color:#e8f4ff;transform:scaleX(1.2937);">FILE</div><div class="t" style="left:33.00px;top:17.40px;font-size:5.80px;color:#555;transform:scaleX(0.6896);">HOME</div><div class="t" style="left:59.00px;top:17.40px;font-size:5.80px;color:#555;transform:scaleX(0.8164);">KYO</div><div class="t" style="left:83.00px;top:17.40px;font-size:5.80px;color:#555;transform:scaleX(0.9150);">HYO</div><svg style="left:508.00px;top:19.00px" width="5" height="3" viewBox="0 0 5 3"><path d="M0.2 0.2L2.5 2.5L4.8 0.2" stroke="#aaa" fill="none" stroke-width="0.7"/></svg><div class="r" style="left:517.70px;top:17.20px;width:6.90px;height:6.90px;background:#1f7fd4;border-radius:50%"></div><div class="t" style="left:520.00px;top:18.04px;font-size:5.20px;color:#fff;font-weight:bold;transform:scaleX(0.9444);">?</div><div class="r" style="left:0.00px;top:26.40px;width:526.30px;height:0.60px;background:#ececec;"></div><svg style="left:6.20px;top:33.20px" width="6" height="5" viewBox="0 0 6 5"><path d="M5.6 2.5H0.8M2.8 0.4L0.7 2.5L2.8 4.6" stroke="#555" fill="none" stroke-width="0.9"/></svg><svg style="left:20.20px;top:33.20px" width="6" height="5" viewBox="0 0 6 5"><path d="M0.4 2.5H5.2M3.2 0.4L5.3 2.5L3.2 4.6" stroke="#cfcfcf" fill="none" stroke-width="0.9"/></svg><svg style="left:32.60px;top:35.20px" width="3.2" height="2" viewBox="0 0 3.2 2"><path d="M0.2 0.2L1.6 1.6L3 0.2" stroke="#999" fill="none" stroke-width="0.6"/></svg><svg style="left:41.20px;top:32.80px" width="5.5" height="6.4" viewBox="0 0 5.5 6.4"><path d="M2.75 6.4V0.8M0.6 2.9L2.75 0.7L4.9 2.9" stroke="#555" fill="none" stroke-width="0.9"/></svg><div class="r" style="left:50.00px;top:29.30px;width:290.50px;height:13.20px;background:#fff;border:0.6px solid #e2e2e2"></div><div class="r" style="left:52.20px;top:32.40px;width:6.00px;height:7.20px;background:#f1d577;border-radius:0.4px"></div><div class="r" style="left:52.80px;top:33.60px;width:4.80px;height:5.40px;background:#fbe7a2;"></div><div class="r" style="left:340.00px;top:29.30px;width:14.50px;height:13.20px;background:#fff;border:0.6px solid #e2e2e2"></div><svg style="left:331.00px;top:35.00px" width="5" height="3" viewBox="0 0 5 3"><path d="M0.2 0.2L2.5 2.5L4.8 0.2" stroke="#666" fill="none" stroke-width="0.8"/></svg><svg style="left:345.20px;top:33.50px" width="5" height="5" viewBox="0 0 5 5"><path d="M4.3 2.2A1.9 1.9 0 1 1 2.6 0.6" stroke="#666" fill="none" stroke-width="0.8"/><path d="M2.1 -0.5L3.4 0.6L2.1 1.7" stroke="#666" fill="none" stroke-width="0.6"/></svg><div class="r" style="left:361.00px;top:29.30px;width:159.50px;height:13.40px;background:#fff;border:0.6px solid #e2e2e2"></div><svg style="left:367.70px;top:33.00px" width="6" height="6" viewBox="0 0 6 6"><circle cx="3.6" cy="2.4" r="1.9" stroke="#888" fill="none" stroke-width="0.6"/><path d="M2.3 3.8L0.3 5.8" stroke="#888" stroke-width="0.7"/></svg><div class="t" style="left:379.70px;top:32.92px;font-size:5.60px;color:#777;transform:scaleX(1.0656);">minecraftWorlds</div><div class="t" style="left:423.00px;top:33.35px;font-size:5.50px;color:#888;transform:scaleX(0.9347);">KENS</div><svg style="left:61.00px;top:34.60px" width="2" height="3" viewBox="0 0 2 3"><path d="M0.2 0.2L1.6 1.5L0.2 2.8" stroke="#777" fill="none" stroke-width="0.5"/></svg><div class="t" style="left:67.00px;top:33.35px;font-size:5.50px;color:#333;font-weight:bold;transform:scaleX(1.0734);">SOURCENEXT FUDE2</div><div class="r" style="left:0.00px;top:259.60px;width:65.00px;height:11.80px;background:#dadada;"></div><div class="abs" style="left:0;top:44px;width:65px;height:243px;overflow:hidden"><div class="r" style="left:15.00px;top:5.00px;width:7.30px;height:5.80px;background:#1f95ea;border:0.5px solid #57b5f0;border-radius:0.4px"></div><div class="t" style="left:25.30px;top:5.55px;font-size:5.50px;color:#2a2a2a;font-weight:bold;transform:scaleX(0.9061);">DESKTOP</div><svg style="left:59.20px;top:5.70px" width="5" height="5" viewBox="0 0 5 5"><path d="M0.3 4.7L2.1 2.9" stroke="#666" stroke-width="0.8"/><path d="M1.3 2.3L3 0.6L4.4 2L2.7 3.7Z" fill="#6a6a6a"/></svg><svg style="left:15.00px;top:15.40px" width="8" height="8" viewBox="0 0 8 8"><path d="M4 0.3V5.5" stroke="#3a82d0" stroke-width="1.8"/><path d="M0.6 3.8L4 7.6L7.4 3.8Z" fill="#3a82d0"/></svg><div class="t" style="left:25.30px;top:16.75px;font-size:5.50px;color:#2a2a2a;font-weight:bold;transform:scaleX(0.7274);">DOWNLOAD</div><svg style="left:59.20px;top:16.90px" width="5" height="5" viewBox="0 0 5 5"><path d="M0.3 4.7L2.1 2.9" stroke="#666" stroke-width="0.8"/><path d="M1.3 2.3L3 0.6L4.4 2L2.7 3.7Z" fill="#6a6a6a"/></svg><div class="r" style="left:15.80px;top:27.10px;width:5.60px;height:7.20px;background:#e3ebf2;border:0.6px solid #9fb0c0"></div><div class="r" style="left:17.00px;top:29.10px;width:3.00px;height:0.60px;background:#8aa;"></div><div class="r" style="left:17.00px;top:30.70px;width:3.00px;height:0.60px;background:#8aa;"></div><div class="t" style="left:25.30px;top:27.95px;font-size:5.50px;color:#2a2a2a;font-weight:bold;transform:scaleX(0.7238);">DOCUMENT</div><svg style="left:59.20px;top:28.10px" width="5" height="5" viewBox="0 0 5 5"><path d="M0.3 4.7L2.1 2.9" stroke="#666" stroke-width="0.8"/><path d="M1.3 2.3L3 0.6L4.4 2L2.7 3.7Z" fill="#6a6a6a"/></svg><div class="r" style="left:15.00px;top:39.40px;width:7.30px;height:5.40px;background:#dde8f0;border:0.6px solid #8fa4b4"></div><svg style="left:15.80px;top:41.40px" width="6" height="3" viewBox="0 0 6 3"><path d="M0 3L2 0.5L4 2.2L6 1V3Z" fill="#2a5a7a"/></svg><div class="t" style="left:25.30px;top:39.25px;font-size:5.50px;color:#2a2a2a;font-weight:bold;transform:scaleX(0.8011);">PICTUR</div><svg style="left:59.20px;top:39.40px" width="5" height="5" viewBox="0 0 5 5"><path d="M0.3 4.7L2.1 2.9" stroke="#666" stroke-width="0.8"/><path d="M1.3 2.3L3 0.6L4.4 2L2.7 3.7Z" fill="#6a6a6a"/></svg><div class="r" style="left:15.50px;top:49.40px;width:6.30px;height:7.40px;background:#3b4048;"></div><div class="r" style="left:16.60px;top:50.50px;width:4.10px;height:2.30px;background:#8d949c;"></div><div class="r" style="left:16.60px;top:53.60px;width:4.10px;height:2.30px;background:#6d747c;"></div><div class="t" style="left:25.30px;top:50.45px;font-size:5.50px;color:#2a2a2a;font-weight:bold;transform:scaleX(0.6778);">VIDEO</div><svg style="left:15.00px;top:60.30px" width="8" height="8.5" viewBox="0 0 8 8.5"><path d="M4.6 0.2V6.3" stroke="#1f8fe0" stroke-width="1"/><path d="M4.6 0.3C5.6 1.6 7.2 2 7.2 3.8" stroke="#1f8fe0" fill="none" stroke-width="1"/><ellipse cx="2.9" cy="6.5" rx="2.1" ry="1.5" fill="#1f8fe0"/></svg><div class="t" style="left:25.30px;top:61.65px;font-size:5.50px;color:#2a2a2a;font-weight:bold;transform:scaleX(0.9156);">MUSICKU</div><svg style="left:11.00px;top:76.40px" width="8" height="6" viewBox="0 0 8 6"><path d="M1.5 5.4H7.1C7.9 5.4 8.2 4.3 7.4 3.7C7.3 2.2 5.9 1.2 4.4 1.6C3.5 0.5 1.6 0.9 1.7 2.6C0.2 2.8 0.3 5.4 1.5 5.4Z" fill="#1e6fcb"/></svg><div class="t" style="left:21.40px;top:76.22px;font-size:5.60px;color:#222;transform:scaleX(0.9724);">OneDrive</div><div class="r" style="left:11.00px;top:90.90px;width:8.00px;height:5.50px;background:#7cc8f4;border:0.6px solid #3a86c8"></div><div class="r" style="left:11.50px;top:96.90px;width:7.00px;height:0.90px;background:#90a0ae;"></div><div class="t" style="left:21.40px;top:90.82px;font-size:5.60px;color:#222;transform:scaleX(0.8484);">PC</div><svg style="left:15.00px;top:101.80px" width="7.5" height="7.5" viewBox="0 0 7.5 7.5"><path d="M0.8 1.8L4 0.3L7 1.8V5.8L4 7.3L0.8 5.8Z" fill="#62d0f0"/><path d="M4 3.2L7 1.8V5.8L4 7.3Z" fill="#1b8fc6"/><path d="M0.8 1.8L4 3.2L7 1.8L4 0.3Z" fill="#a8e8fa"/></svg><div class="t" style="left:25.30px;top:102.95px;font-size:5.50px;color:#2a2a2a;font-weight:bold;transform:scaleX(0.9381);">3D OBJECTS</div><svg style="left:15.00px;top:112.90px" width="8" height="8" viewBox="0 0 8 8"><path d="M4 0.3V5.5" stroke="#3a82d0" stroke-width="1.8"/><path d="M0.6 3.8L4 7.6L7.4 3.8Z" fill="#3a82d0"/></svg><div class="t" style="left:25.30px;top:114.25px;font-size:5.50px;color:#2a2a2a;font-weight:bold;transform:scaleX(0.7274);">DOWNLOAD</div><div class="r" style="left:15.00px;top:124.90px;width:7.30px;height:5.80px;background:#1f95ea;border:0.5px solid #57b5f0;border-radius:0.4px"></div><div class="t" style="left:25.30px;top:125.45px;font-size:5.50px;color:#2a2a2a;font-weight:bold;transform:scaleX(0.9061);">DESKTOP</div><div class="r" style="left:15.80px;top:135.80px;width:5.60px;height:7.20px;background:#e3ebf2;border:0.6px solid #9fb0c0"></div><div class="r" style="left:17.00px;top:137.80px;width:3.00px;height:0.60px;background:#8aa;"></div><div class="r" style="left:17.00px;top:139.40px;width:3.00px;height:0.60px;background:#8aa;"></div><div class="t" style="left:25.30px;top:136.65px;font-size:5.50px;color:#2a2a2a;font-weight:bold;transform:scaleX(0.7238);">DOCUMENT</div><div class="r" style="left:15.00px;top:148.10px;width:7.30px;height:5.40px;background:#dde8f0;border:0.6px solid #8fa4b4"></div><svg style="left:15.80px;top:150.10px" width="6" height="3" viewBox="0 0 6 3"><path d="M0 3L2 0.5L4 2.2L6 1V3Z" fill="#2a5a7a"/></svg><div class="t" style="left:25.30px;top:147.95px;font-size:5.50px;color:#2a2a2a;font-weight:bold;transform:scaleX(0.8011);">PICTUR</div><div class="r" style="left:15.50px;top:158.10px;width:6.30px;height:7.40px;background:#3b4048;"></div><div class="r" style="left:16.60px;top:159.20px;width:4.10px;height:2.30px;background:#8d949c;"></div><div class="r" style="left:16.60px;top:162.30px;width:4.10px;height:2.30px;background:#6d747c;"></div><div class="t" style="left:25.30px;top:159.15px;font-size:5.50px;color:#2a2a2a;font-weight:bold;transform:scaleX(0.6778);">VIDEO</div><svg style="left:15.00px;top:169.10px" width="8" height="8.5" viewBox="0 0 8 8.5"><path d="M4.6 0.2V6.3" stroke="#1f8fe0" stroke-width="1"/><path d="M4.6 0.3C5.6 1.6 7.2 2 7.2 3.8" stroke="#1f8fe0" fill="none" stroke-width="1"/><ellipse cx="2.9" cy="6.5" rx="2.1" ry="1.5" fill="#1f8fe0"/></svg><div class="t" style="left:25.30px;top:170.45px;font-size:5.50px;color:#2a2a2a;font-weight:bold;transform:scaleX(0.9156);">MUSICKU</div><div class="r" style="left:15.00px;top:185.30px;width:7.30px;height:2.20px;background:#3c4650;"></div><div class="r" style="left:15.40px;top:181.50px;width:4.20px;height:3.20px;background:#b8dcd0;"></div><div class="t" style="left:25.30px;top:181.32px;font-size:5.60px;color:#222;transform:scaleX(0.9672);">Windows (C:)</div><div class="r" style="left:15.00px;top:192.70px;width:8.20px;height:6.40px;background:#eaf0f6;border:0.6px solid #7a9ab8"></div><div class="r" style="left:17.60px;top:194.20px;width:2.60px;height:3.40px;background:#2a4a7a;"></div><div class="t" style="left:25.30px;top:192.95px;font-size:5.50px;color:#2a2a2a;font-weight:bold;transform:scaleX(0.7404);">SOURCENEXT FUDE</div><div class="r" style="left:11.00px;top:208.20px;width:8.20px;height:6.40px;background:#eaf0f6;border:0.6px solid #7a9ab8"></div><div class="r" style="left:13.60px;top:209.70px;width:2.60px;height:3.40px;background:#2a4a7a;"></div><div class="t" style="left:21.40px;top:208.45px;font-size:5.50px;color:#2a2a2a;font-weight:bold;transform:scaleX(0.7791);">SOURCENEXT FUDE2</div><div class="r" style="left:15.00px;top:218.80px;width:6.50px;height:7.20px;background:#f1d577;border-radius:0.4px"></div><div class="r" style="left:15.60px;top:220.00px;width:5.30px;height:5.40px;background:#fbe7a2;"></div><div class="t" style="left:25.30px;top:219.22px;font-size:5.60px;color:#222;transform:scaleX(1.0160);">minecraftWorlds</div><svg style="left:11.00px;top:233.90px" width="8.5" height="7" viewBox="0 0 8.5 7"><path d="M0.6 4.2L5 1.2Q6 0.6 6.8 1.2L8 2.4Q8.4 3 7.6 3.6L3.4 6.4Q2.6 6.9 1.8 6.4L0.6 5.4Q0.2 4.8 0.6 4.2Z" fill="#3f9bd6"/><path d="M3.4 6.4L7.6 3.6Q8.4 3 8 2.4L8 3.4L3.6 6.8Z" fill="#1f6aa8"/></svg><div class="t" style="left:21.40px;top:234.75px;font-size:5.50px;color:#2a2a2a;font-weight:bold;transform:scaleX(0.8587);">NETWORK</div></div><div class="r" style="left:65.20px;top:46.00px;width:8.00px;height:240.00px;background:#f0f0f0;"></div><svg style="left:67.20px;top:49.70px" width="4" height="2.5" viewBox="0 0 4 2.5"><path d="M0.2 2.2L2 0.4L3.8 2.2" stroke="#555" fill="none" stroke-width="0.8"/></svg><div class="r" style="left:65.60px;top:66.80px;width:7.20px;height:207.00px;background:#c8c8c8;"></div><svg style="left:67.20px;top:280.20px" width="4" height="2.5" viewBox="0 0 4 2.5"><path d="M0.2 0.3L2 2.1L3.8 0.3" stroke="#555" fill="none" stroke-width="0.8"/></svg><div class="t" style="left:83.00px;top:49.75px;font-size:5.50px;color:#777;transform:scaleX(0.6733);">NAME</div><svg style="left:139.80px;top:46.30px" width="3" height="2" viewBox="0 0 3 2"><path d="M0.2 1.7L1.5 0.3L2.8 1.7" stroke="#aaa" fill="none" stroke-width="0.5"/></svg><div class="r" style="left:201.70px;top:45.50px;width:0.60px;height:14.00px;background:#eaeaea;"></div><div class="r" style="left:269.70px;top:45.50px;width:0.60px;height:14.00px;background:#eaeaea;"></div><div class="r" style="left:325.70px;top:45.50px;width:0.60px;height:14.00px;background:#eaeaea;"></div><div class="r" style="left:363.70px;top:45.50px;width:0.60px;height:14.00px;background:#eaeaea;"></div><div class="t" style="left:205.70px;top:49.75px;font-size:5.50px;color:#777;transform:scaleX(0.8779);">KOUSHIN</div><div class="t" style="left:273.00px;top:49.75px;font-size:5.50px;color:#777;transform:scaleX(0.7657);">TYPE</div><div class="t" style="left:329.00px;top:49.75px;font-size:5.50px;color:#777;transform:scaleX(1.0634);">SIZE</div><div class="r" style="left:81.00px;top:58.07px;width:281.50px;height:9.86px;background:#d9d9d9;border-bottom:0.6px solid #c9c9c9"></div><div class="r" style="left:84.20px;top:59.00px;width:5.80px;height:8.00px;background:#f0d060;border-radius:0.5px"></div><div class="r" style="left:84.80px;top:60.40px;width:4.60px;height:6.00px;background:#fce79a;"></div><div class="t" style="left:92.40px;top:60.72px;font-size:5.60px;color:#1a1a1a;transform:scaleX(0.9300);">TmoAXzvNWgA=</div><div class="t" style="left:205.50px;top:60.83px;font-size:5.40px;color:#808080;transform:scaleX(0.9634);">2020/07/08 19:57</div><div class="t" style="left:272.40px;top:60.85px;font-size:5.50px;color:#7a7a7a;transform:scaleX(0.8495);">FILE FOLDR</div><div class="r" style="left:81.00px;top:67.93px;width:281.50px;height:9.86px;background:#d9d9d9;border-bottom:0.6px solid #c9c9c9"></div><div class="r" style="left:84.20px;top:68.86px;width:5.80px;height:8.00px;background:#f0d060;border-radius:0.5px"></div><div class="r" style="left:84.80px;top:70.26px;width:4.60px;height:6.00px;background:#fce79a;"></div><div class="t" style="left:92.40px;top:70.58px;font-size:5.60px;color:#1a1a1a;transform:scaleX(0.9300);">TpU+XrEfBgA=</div><div class="t" style="left:205.50px;top:70.69px;font-size:5.40px;color:#808080;transform:scaleX(0.9634);">2020/02/08 21:56</div><div class="t" style="left:272.40px;top:70.71px;font-size:5.50px;color:#7a7a7a;transform:scaleX(0.8495);">FILE FOLDR</div><div class="r" style="left:81.00px;top:77.79px;width:281.50px;height:9.86px;background:#d9d9d9;border-bottom:0.6px solid #c9c9c9"></div><div class="r" style="left:84.20px;top:78.72px;width:5.80px;height:8.00px;background:#f0d060;border-radius:0.5px"></div><div class="r" style="left:84.80px;top:80.12px;width:4.60px;height:6.00px;background:#fce79a;"></div><div class="t" style="left:92.40px;top:80.44px;font-size:5.60px;color:#1a1a1a;transform:scaleX(0.9300);">TRr-Xv3PCAA=</div><div class="t" style="left:205.50px;top:80.55px;font-size:5.40px;color:#808080;transform:scaleX(0.9634);">2020/07/03 20:59</div><div class="t" style="left:272.40px;top:80.57px;font-size:5.50px;color:#7a7a7a;transform:scaleX(0.8495);">FILE FOLDR</div><div class="r" style="left:81.00px;top:87.65px;width:281.50px;height:9.86px;background:#d9d9d9;border-bottom:0.6px solid #c9c9c9"></div><div class="r" style="left:84.20px;top:88.58px;width:5.80px;height:8.00px;background:#f0d060;border-radius:0.5px"></div><div class="r" style="left:84.80px;top:89.98px;width:4.60px;height:6.00px;background:#fce79a;"></div><div class="t" style="left:92.40px;top:90.30px;font-size:5.60px;color:#1a1a1a;transform:scaleX(0.9300);">uN94XYebAAA=</div><div class="t" style="left:205.50px;top:90.41px;font-size:5.40px;color:#808080;transform:scaleX(0.9726);">2019/08/11 21:17</div><div class="t" style="left:272.40px;top:90.43px;font-size:5.50px;color:#7a7a7a;transform:scaleX(0.8495);">FILE FOLDR</div><div class="r" style="left:81.00px;top:97.51px;width:281.50px;height:9.86px;background:#d9d9d9;border-bottom:0.6px solid #c9c9c9"></div><div class="r" style="left:84.20px;top:98.44px;width:5.80px;height:8.00px;background:#f0d060;border-radius:0.5px"></div><div class="r" style="left:84.80px;top:99.84px;width:4.60px;height:6.00px;background:#fce79a;"></div><div class="t" style="left:92.40px;top:100.16px;font-size:5.60px;color:#1a1a1a;transform:scaleX(0.9300);">uNasXhg60wA=</div><div class="t" style="left:205.50px;top:100.27px;font-size:5.40px;color:#808080;transform:scaleX(0.9634);">2020/05/02 20:44</div><div class="t" style="left:272.40px;top:100.29px;font-size:5.50px;color:#7a7a7a;transform:scaleX(0.8495);">FILE FOLDR</div><div class="r" style="left:81.00px;top:107.37px;width:281.50px;height:9.86px;background:#d9d9d9;border-bottom:0.6px solid #c9c9c9"></div><div class="r" style="left:84.20px;top:108.30px;width:5.80px;height:8.00px;background:#f0d060;border-radius:0.5px"></div><div class="r" style="left:84.80px;top:109.70px;width:4.60px;height:6.00px;background:#fce79a;"></div><div class="t" style="left:92.40px;top:110.02px;font-size:5.60px;color:#1a1a1a;transform:scaleX(0.9300);">uVeUXj2BFAA=</div><div class="t" style="left:205.50px;top:110.13px;font-size:5.40px;color:#808080;transform:scaleX(0.9634);">2020/04/14 20:47</div><div class="t" style="left:272.40px;top:110.15px;font-size:5.50px;color:#7a7a7a;transform:scaleX(0.8495);">FILE FOLDR</div><div class="r" style="left:81.00px;top:117.23px;width:281.50px;height:9.86px;background:#d9d9d9;border-bottom:0.6px solid #c9c9c9"></div><div class="r" style="left:84.20px;top:118.16px;width:5.80px;height:8.00px;background:#f0d060;border-radius:0.5px"></div><div class="r" style="left:84.80px;top:119.56px;width:4.60px;height:6.00px;background:#fce79a;"></div><div class="t" style="left:92.40px;top:119.88px;font-size:5.60px;color:#1a1a1a;transform:scaleX(0.9300);">uveWXnYeIAA=</div><div class="t" style="left:205.50px;top:119.99px;font-size:5.40px;color:#808080;transform:scaleX(0.9634);">2020/04/17 20:14</div><div class="t" style="left:272.40px;top:120.01px;font-size:5.50px;color:#7a7a7a;transform:scaleX(0.8495);">FILE FOLDR</div><div class="r" style="left:81.00px;top:127.09px;width:281.50px;height:9.86px;background:#d9d9d9;border-bottom:0.6px solid #c9c9c9"></div><div class="r" style="left:84.20px;top:128.02px;width:5.80px;height:8.00px;background:#f0d060;border-radius:0.5px"></div><div class="r" style="left:84.80px;top:129.42px;width:4.60px;height:6.00px;background:#fce79a;"></div><div class="t" style="left:92.40px;top:129.74px;font-size:5.60px;color:#1a1a1a;transform:scaleX(0.9300);">vUijXoYBAgA=</div><div class="t" style="left:205.50px;top:129.85px;font-size:5.40px;color:#808080;transform:scaleX(0.9726);">2020/01/19 11:16</div><div class="t" style="left:272.40px;top:129.87px;font-size:5.50px;color:#7a7a7a;transform:scaleX(0.8495);">FILE FOLDR</div><div class="r" style="left:81.00px;top:136.95px;width:281.50px;height:9.86px;background:#d9d9d9;border-bottom:0.6px solid #c9c9c9"></div><div class="r" style="left:84.20px;top:137.88px;width:5.80px;height:8.00px;background:#f0d060;border-radius:0.5px"></div><div class="r" style="left:84.80px;top:139.28px;width:4.60px;height:6.00px;background:#fce79a;"></div><div class="t" style="left:92.40px;top:139.60px;font-size:5.60px;color:#1a1a1a;transform:scaleX(0.9300);">vXzTXoKiBQA=</div><div class="t" style="left:205.50px;top:139.71px;font-size:5.40px;color:#808080;transform:scaleX(0.9634);">2020/05/31 19:04</div><div class="t" style="left:272.40px;top:139.73px;font-size:5.50px;color:#7a7a7a;transform:scaleX(0.8495);">FILE FOLDR</div><div class="r" style="left:81.00px;top:146.81px;width:281.50px;height:9.86px;background:#d9d9d9;border-bottom:0.6px solid #c9c9c9"></div><div class="r" style="left:84.20px;top:147.74px;width:5.80px;height:8.00px;background:#f0d060;border-radius:0.5px"></div><div class="r" style="left:84.80px;top:149.14px;width:4.60px;height:6.00px;background:#fce79a;"></div><div class="t" style="left:92.40px;top:149.46px;font-size:5.60px;color:#1a1a1a;transform:scaleX(0.9300);">VZMKX4VBoQA=</div><div class="t" style="left:205.50px;top:149.57px;font-size:5.40px;color:#808080;transform:scaleX(0.9634);">2020/07/12 13:40</div><div class="t" style="left:272.40px;top:149.59px;font-size:5.50px;color:#7a7a7a;transform:scaleX(0.8495);">FILE FOLDR</div><div class="r" style="left:81.00px;top:156.67px;width:281.50px;height:9.86px;background:#d9d9d9;border-bottom:0.6px solid #c9c9c9"></div><div class="r" style="left:84.20px;top:157.60px;width:5.80px;height:8.00px;background:#f0d060;border-radius:0.5px"></div><div class="r" style="left:84.80px;top:159.00px;width:4.60px;height:6.00px;background:#fce79a;"></div><div class="t" style="left:92.40px;top:159.32px;font-size:5.60px;color:#1a1a1a;transform:scaleX(0.9300);">WByjXrLWXgA=</div><div class="t" style="left:205.50px;top:159.43px;font-size:5.40px;color:#808080;transform:scaleX(0.9634);">2020/04/25 15:03</div><div class="t" style="left:272.40px;top:159.45px;font-size:5.50px;color:#7a7a7a;transform:scaleX(0.8495);">FILE FOLDR</div><div class="r" style="left:81.00px;top:166.53px;width:281.50px;height:9.86px;background:#d9d9d9;border-bottom:0.6px solid #c9c9c9"></div><div class="r" style="left:84.20px;top:167.46px;width:5.80px;height:8.00px;background:#f0d060;border-radius:0.5px"></div><div class="r" style="left:84.80px;top:168.86px;width:4.60px;height:6.00px;background:#fce79a;"></div><div class="t" style="left:92.40px;top:169.18px;font-size:5.60px;color:#1a1a1a;transform:scaleX(0.9300);">Wbh1XRrjAQA=</div><div class="t" style="left:205.50px;top:169.29px;font-size:5.40px;color:#808080;transform:scaleX(0.9726);">2019/09/09 11:31</div><div class="t" style="left:272.40px;top:169.31px;font-size:5.50px;color:#7a7a7a;transform:scaleX(0.8495);">FILE FOLDR</div><div class="r" style="left:81.00px;top:176.39px;width:281.50px;height:9.86px;background:#d9d9d9;border-bottom:0.6px solid #c9c9c9"></div><div class="r" style="left:84.20px;top:177.32px;width:5.80px;height:8.00px;background:#f0d060;border-radius:0.5px"></div><div class="r" style="left:84.80px;top:178.72px;width:4.60px;height:6.00px;background:#fce79a;"></div><div class="t" style="left:92.40px;top:179.04px;font-size:5.60px;color:#1a1a1a;transform:scaleX(0.9300);">WB0KYSRbgA=</div><div class="t" style="left:205.50px;top:179.15px;font-size:5.40px;color:#808080;transform:scaleX(0.9634);">2019/09/08 10:31</div><div class="t" style="left:272.40px;top:179.17px;font-size:5.50px;color:#7a7a7a;transform:scaleX(0.8495);">FILE FOLDR</div><div class="r" style="left:81.00px;top:186.25px;width:281.50px;height:9.86px;background:#d9d9d9;border-bottom:0.6px solid #c9c9c9"></div><div class="r" style="left:84.20px;top:187.18px;width:5.80px;height:8.00px;background:#f0d060;border-radius:0.5px"></div><div class="r" style="left:84.80px;top:188.58px;width:4.60px;height:6.00px;background:#fce79a;"></div><div class="t" style="left:92.40px;top:188.90px;font-size:5.60px;color:#1a1a1a;transform:scaleX(0.9300);">wMXDXgl6AwA=</div><div class="t" style="left:205.50px;top:189.01px;font-size:5.40px;color:#808080;transform:scaleX(0.9634);">2020/07/17 20:55</div><div class="t" style="left:272.40px;top:189.03px;font-size:5.50px;color:#7a7a7a;transform:scaleX(0.8495);">FILE FOLDR</div><div class="r" style="left:81.00px;top:196.11px;width:281.50px;height:9.86px;background:#d9d9d9;border-bottom:0.6px solid #c9c9c9"></div><div class="r" style="left:84.20px;top:197.04px;width:5.80px;height:8.00px;background:#f0d060;border-radius:0.5px"></div><div class="r" style="left:84.80px;top:198.44px;width:4.60px;height:6.00px;background:#fce79a;"></div><div class="t" style="left:92.40px;top:198.76px;font-size:5.60px;color:#1a1a1a;transform:scaleX(0.9300);">WsS-Xj4EKQA=</div><div class="t" style="left:205.50px;top:198.87px;font-size:5.40px;color:#808080;transform:scaleX(0.9634);">2020/05/18 21:38</div><div class="t" style="left:272.40px;top:198.89px;font-size:5.50px;color:#7a7a7a;transform:scaleX(0.8495);">FILE FOLDR</div><div class="r" style="left:81.00px;top:205.97px;width:281.50px;height:9.86px;background:#d9d9d9;border-bottom:0.6px solid #c9c9c9"></div><div class="r" style="left:84.20px;top:206.90px;width:5.80px;height:8.00px;background:#f0d060;border-radius:0.5px"></div><div class="r" style="left:84.80px;top:208.30px;width:4.60px;height:6.00px;background:#fce79a;"></div><div class="t" style="left:92.40px;top:208.62px;font-size:5.60px;color:#1a1a1a;transform:scaleX(0.9300);">WvqjXWHuEgA=</div><div class="t" style="left:205.50px;top:208.73px;font-size:5.40px;color:#808080;transform:scaleX(0.9634);">2019/10/14 16:19</div><div class="t" style="left:272.40px;top:208.75px;font-size:5.50px;color:#7a7a7a;transform:scaleX(0.8495);">FILE FOLDR</div><div class="r" style="left:81.00px;top:215.83px;width:281.50px;height:9.86px;background:#d9d9d9;border-bottom:0.6px solid #c9c9c9"></div><div class="r" style="left:84.20px;top:216.76px;width:5.80px;height:8.00px;background:#f0d060;border-radius:0.5px"></div><div class="r" style="left:84.80px;top:218.16px;width:4.60px;height:6.00px;background:#fce79a;"></div><div class="t" style="left:92.40px;top:218.48px;font-size:5.60px;color:#1a1a1a;transform:scaleX(0.9300);">X6lNX3v2DQA=</div><div class="t" style="left:205.50px;top:218.59px;font-size:5.40px;color:#808080;transform:scaleX(0.9634);">2020/07/14 21:20</div><div class="t" style="left:272.40px;top:218.61px;font-size:5.50px;color:#7a7a7a;transform:scaleX(0.8495);">FILE FOLDR</div><div class="r" style="left:81.00px;top:225.69px;width:281.50px;height:9.86px;background:#d9d9d9;border-bottom:0.6px solid #c9c9c9"></div><div class="r" style="left:84.20px;top:226.62px;width:5.80px;height:8.00px;background:#f0d060;border-radius:0.5px"></div><div class="r" style="left:84.80px;top:228.02px;width:4.60px;height:6.00px;background:#fce79a;"></div><div class="t" style="left:92.40px;top:228.34px;font-size:5.60px;color:#1a1a1a;transform:scaleX(0.9300);">xGJjXqqiAQA=</div><div class="t" style="left:205.50px;top:228.45px;font-size:5.40px;color:#808080;transform:scaleX(0.9634);">2020/05/08 20:04</div><div class="t" style="left:272.40px;top:228.47px;font-size:5.50px;color:#7a7a7a;transform:scaleX(0.8495);">FILE FOLDR</div><div class="r" style="left:81.00px;top:235.55px;width:281.50px;height:9.86px;background:#d9d9d9;border-bottom:0.6px solid #c9c9c9"></div><div class="r" style="left:84.20px;top:236.48px;width:5.80px;height:8.00px;background:#f0d060;border-radius:0.5px"></div><div class="r" style="left:84.80px;top:237.88px;width:4.60px;height:6.00px;background:#fce79a;"></div><div class="t" style="left:92.40px;top:238.20px;font-size:5.60px;color:#1a1a1a;transform:scaleX(0.9300);">xHD1XUOXBAA=</div><div class="t" style="left:205.50px;top:238.31px;font-size:5.40px;color:#808080;transform:scaleX(0.9634);">2020/01/06 18:02</div><div class="t" style="left:272.40px;top:238.33px;font-size:5.50px;color:#7a7a7a;transform:scaleX(0.8495);">FILE FOLDR</div><div class="r" style="left:81.00px;top:245.41px;width:281.50px;height:9.86px;background:#d9d9d9;border-bottom:0.6px solid #c9c9c9"></div><div class="r" style="left:84.20px;top:246.34px;width:5.80px;height:8.00px;background:#f0d060;border-radius:0.5px"></div><div class="r" style="left:84.80px;top:247.74px;width:4.60px;height:6.00px;background:#fce79a;"></div><div class="t" style="left:92.40px;top:248.06px;font-size:5.60px;color:#1a1a1a;transform:scaleX(0.9300);">xVMEXSNmDQA=</div><div class="t" style="left:205.50px;top:248.17px;font-size:5.40px;color:#808080;transform:scaleX(0.9726);">2020/07/12 11:19</div><div class="t" style="left:272.40px;top:248.19px;font-size:5.50px;color:#7a7a7a;transform:scaleX(0.8495);">FILE FOLDR</div><div class="r" style="left:81.00px;top:255.27px;width:281.50px;height:9.86px;background:#d9d9d9;border-bottom:0.6px solid #c9c9c9"></div><div class="r" style="left:84.20px;top:256.20px;width:5.80px;height:8.00px;background:#f0d060;border-radius:0.5px"></div><div class="r" style="left:84.80px;top:257.60px;width:4.60px;height:6.00px;background:#fce79a;"></div><div class="t" style="left:92.40px;top:257.92px;font-size:5.60px;color:#1a1a1a;transform:scaleX(0.9300);">y+qHXgsAIgA=</div><div class="t" style="left:205.50px;top:258.03px;font-size:5.40px;color:#808080;transform:scaleX(0.9634);">2020/04/06 19:57</div><div class="t" style="left:272.40px;top:258.05px;font-size:5.50px;color:#7a7a7a;transform:scaleX(0.8495);">FILE FOLDR</div><div class="r" style="left:81.00px;top:265.13px;width:281.50px;height:9.86px;background:#d9d9d9;border-bottom:0.6px solid #c9c9c9"></div><div class="r" style="left:84.20px;top:266.06px;width:5.80px;height:8.00px;background:#f0d060;border-radius:0.5px"></div><div class="r" style="left:84.80px;top:267.46px;width:4.60px;height:6.00px;background:#fce79a;"></div><div class="t" style="left:92.40px;top:267.78px;font-size:5.60px;color:#1a1a1a;transform:scaleX(0.9300);">YwShXVfFAwA=</div><div class="t" style="left:205.50px;top:267.89px;font-size:5.40px;color:#808080;transform:scaleX(0.9634);">2019/10/14 13:31</div><div class="t" style="left:272.40px;top:267.91px;font-size:5.50px;color:#7a7a7a;transform:scaleX(0.8495);">FILE FOLDR</div><div class="r" style="left:81.00px;top:274.99px;width:281.50px;height:9.86px;background:#d9d9d9;border-bottom:0.6px solid #c9c9c9"></div><div class="r" style="left:84.20px;top:275.92px;width:5.80px;height:8.00px;background:#f0d060;border-radius:0.5px"></div><div class="r" style="left:84.80px;top:277.32px;width:4.60px;height:6.00px;background:#fce79a;"></div><div class="t" style="left:92.40px;top:277.64px;font-size:5.60px;color:#1a1a1a;transform:scaleX(0.9300);">zCGkXaY8AwA=</div><div class="t" style="left:205.50px;top:277.75px;font-size:5.40px;color:#808080;transform:scaleX(0.9634);">2019/10/17 17:38</div><div class="t" style="left:272.40px;top:277.77px;font-size:5.50px;color:#7a7a7a;transform:scaleX(0.8495);">FILE FOLDR</div><div class="r" style="left:519.00px;top:46.00px;width:7.00px;height:240.00px;background:#f5f5f5;"></div><div class="r" style="left:519.30px;top:230.00px;width:6.40px;height:45.50px;background:#c8c8c8;"></div><svg style="left:520.50px;top:280.20px" width="4" height="2.5" viewBox="0 0 4 2.5"><path d="M0.2 0.3L2 2.1L3.8 0.3" stroke="#555" fill="none" stroke-width="0.8"/></svg><div class="t" style="left:7.00px;top:288.22px;font-size:5.60px;color:#555;transform:scaleX(0.8562);">123</div><div class="t" style="left:17.00px;top:288.50px;font-size:5.80px;color:#555;transform:scaleX(0.7758);">KOMOKU</div><div class="t" style="left:47.40px;top:288.22px;font-size:5.60px;color:#555;transform:scaleX(0.8562);">123</div><div class="t" style="left:57.40px;top:288.50px;font-size:5.80px;color:#555;transform:scaleX(0.6807);">KOMOKU SENTAKU</div><div class="r" style="left:503.40px;top:285.90px;width:10.90px;height:10.40px;background:#cde0ec;border:0.6px solid #b4d0e2"></div><svg style="left:505.00px;top:288.00px" width="8" height="6.5" viewBox="0 0 8 6.5"><path d="M0.3 0.6H1.6M2.6 0.6H7.4M0.3 2.8H1.6M2.6 2.8H7.4M0.3 5H1.6M2.6 5H7.4" stroke="#5a7890" stroke-width="0.7"/></svg><div class="r" style="left:516.30px;top:288.10px;width:6.70px;height:5.60px;background:#e4e8ec;border:0.6px solid #b0b4b8"></div><div class="r" style="left:517.20px;top:290.00px;width:4.00px;height:2.00px;background:#2a3340;"></div></div>
<div class="abs" style="left:115.4px;top:115.3px;width:210.4px;height:76.7px;background:#fff;border:0.6px solid #8c8c8c;box-shadow:0 1px 10px 1px rgba(0,0,0,.38)"></div>
<div class="r" style="left:120.30px;top:121.00px;width:2.80px;height:2.40px;background:#3aa850;"></div><div class="r" style="left:123.20px;top:122.60px;width:3.80px;height:2.70px;background:#3a7fd0;"></div>
<div class="t" style="left:129.80px;top:119.50px;font-size:6.00px;color:#333;transform:scaleX(0.8744);">39%</div>
<div class="t" style="left:141.80px;top:119.81px;font-size:6.00px;color:#333;font-weight:bold;transform:scaleX(0.4973);">KANRY</div>
<div class="r" style="left:269.80px;top:122.10px;width:5.80px;height:0.70px;background:#333;"></div>
<div class="r" style="left:291.30px;top:120.30px;width:5.00px;height:4.30px;background:transparent;border:0.6px solid #d0d0d0"></div>
<svg style="left:312.00px;top:120.00px" width="6" height="5.2" viewBox="0 0 6 5.2"><path d="M0.3 0.2L5.7 5M5.7 0.2L0.3 5" stroke="#333" stroke-width="0.75"/></svg>
<div class="t" style="left:128.60px;top:137.12px;font-size:5.60px;color:#333;transform:scaleX(0.8920);">2,106</div>
<div class="t" style="left:142.50px;top:137.55px;font-size:5.50px;color:#444;font-weight:bold;transform:scaleX(0.6975);">KOMOKU COPY CHU:</div>
<div class="t" style="left:184.50px;top:137.12px;font-size:5.60px;color:#3a72b5;transform:scaleX(1.0408);">minecraftWorlds</div>
<div class="t" style="left:228.50px;top:137.55px;font-size:5.50px;color:#444;font-weight:bold;transform:scaleX(1.1329);">KA</div>
<div class="t" style="left:240.50px;top:137.12px;font-size:5.60px;color:#3a72b5;transform:scaleX(1.0160);">minecraftWorlds</div>
<div class="t" style="left:128.60px;top:143.78px;font-size:8.40px;color:#333;transform:scaleX(0.9219);">39%</div>
<div class="t" style="left:146.50px;top:144.64px;font-size:7.80px;color:#333;font-weight:bold;transform:scaleX(0.5681);">KANR</div>
<div class="r" style="left:285.60px;top:147.60px;width:1.40px;height:4.00px;background:#222;"></div><div class="r" style="left:288.40px;top:147.60px;width:1.40px;height:4.00px;background:#222;"></div>
<svg style="left:307.00px;top:147.40px" width="4.5" height="4.5" viewBox="0 0 4.5 4.5"><path d="M0.4 0.4L4.1 4.1M4.1 0.4L0.4 4.1" stroke="#222" stroke-width="1"/></svg>
<div class="r" style="left:128.60px;top:157.40px;width:185.10px;height:6.60px;background:#e6e6e6;"></div>
<div class="r" style="left:128.60px;top:157.40px;width:71.30px;height:6.60px;background:linear-gradient(90deg,#0aa52a 0%,#10ab30 50%,#3fc34a 75%,#86e082 100%);"></div>
<div class="r" style="left:115.90px;top:170.60px;width:209.50px;height:0.60px;background:#ededed;"></div>
<div class="r" style="left:128.40px;top:177.40px;width:8.80px;height:8.80px;background:#fff;border:0.6px solid #8a8a8a;border-radius:50%"></div>
<svg style="left:130.80px;top:180.80px" width="4" height="2.5" viewBox="0 0 4 2.5"><path d="M0.2 0.3L2 2.1L3.8 0.3" stroke="#777" fill="none" stroke-width="0.7"/></svg>
<div class="t" style="left:140.00px;top:179.55px;font-size:5.50px;color:#333;font-weight:bold;transform:scaleX(1.0291);">SHOSAI</div>
<div class="abs" style="left:332.7px;top:56px;width:526.3px;height:296.3px;background:#fff;box-shadow:0 0 1.5px 0.3px rgba(0,10,40,.55),0 1px 5px rgba(0,0,0,.2);overflow:hidden"><div class="r" style="left:4.00px;top:4.60px;width:6.60px;height:6.80px;background:#f1d577;border-radius:0.4px"></div><div class="r" style="left:4.60px;top:5.80px;width:5.40px;height:5.00px;background:#fbe7a2;"></div><div class="r" style="left:14.00px;top:5.00px;width:0.60px;height:6.00px;background:#c8c8c8;"></div><div class="r" style="left:20.20px;top:4.60px;width:5.60px;height:6.80px;background:#faf7f2;border:0.6px solid #a09a95"></div><svg style="left:21.20px;top:6.50px" width="4" height="3" viewBox="0 0 4 3"><path d="M0.3 1.5L1.5 2.6L3.6 0.3" stroke="#d07a4a" fill="none" stroke-width="0.6"/></svg><div class="r" style="left:30.00px;top:4.60px;width:6.40px;height:6.80px;background:#f1d577;border-radius:0.4px"></div><div class="r" style="left:30.60px;top:5.80px;width:5.20px;height:5.00px;background:#fbe7a2;"></div><svg style="left:39.60px;top:7.00px" width="3.4" height="2.2" viewBox="0 0 3.4 2.2"><path d="M0 0H3.4L1.7 2.2Z" fill="#333"/></svg><div class="r" style="left:46.80px;top:5.00px;width:0.60px;height:6.00px;background:#c8c8c8;"></div><div class="t" style="left:51.00px;top:4.92px;font-size:5.60px;color:#a8a8a8;transform:scaleX(1.0160);">minecraftWorlds</div><div class="r" style="left:470.00px;top:7.10px;width:5.20px;height:0.50px;background:#aaa;"></div><div class="r" style="left:491.00px;top:4.70px;width:5.30px;height:5.30px;background:transparent;border:0.5px solid #aaa"></div><svg style="left:513.00px;top:5.20px" width="5" height="5" viewBox="0 0 5 5"><path d="M0.2 0.2L4.8 4.8M4.8 0.2L0.2 4.8" stroke="#aaa" stroke-width="0.55"/></svg><div class="r" style="left:0.00px;top:14.80px;width:26.00px;height:10.40px;background:#1565b8;"></div><div class="t" style="left:5.00px;top:17.30px;font-size:5.60px;color:#e8f4ff;transform:scaleX(1.2937);">FILE</div><div class="t" style="left:33.00px;top:17.40px;font-size:5.80px;color:#555;transform:scaleX(0.6896);">HOME</div><div class="t" style="left:59.00px;top:17.40px;font-size:5.80px;color:#555;transform:scaleX(0.8164);">KYO</div><div class="t" style="left:83.00px;top:17.40px;font-size:5.80px;color:#555;transform:scaleX(0.9150);">HYO</div><svg style="left:508.00px;top:19.00px" width="5" height="3" viewBox="0 0 5 3"><path d="M0.2 0.2L2.5 2.5L4.8 0.2" stroke="#aaa" fill="none" stroke-width="0.7"/></svg><div class="r" style="left:517.70px;top:17.20px;width:6.90px;height:6.90px;background:#1f7fd4;border-radius:50%"></div><div class="t" style="left:520.00px;top:18.04px;font-size:5.20px;color:#fff;font-weight:bold;transform:scaleX(0.9444);">?</div><div class="r" style="left:0.00px;top:26.40px;width:526.30px;height:0.60px;background:#ececec;"></div><svg style="left:6.20px;top:33.20px" width="6" height="5" viewBox="0 0 6 5"><path d="M5.6 2.5H0.8M2.8 0.4L0.7 2.5L2.8 4.6" stroke="#555" fill="none" stroke-width="0.9"/></svg><svg style="left:20.20px;top:33.20px" width="6" height="5" viewBox="0 0 6 5"><path d="M0.4 2.5H5.2M3.2 0.4L5.3 2.5L3.2 4.6" stroke="#cfcfcf" fill="none" stroke-width="0.9"/></svg><svg style="left:32.60px;top:35.20px" width="3.2" height="2" viewBox="0 0 3.2 2"><path d="M0.2 0.2L1.6 1.6L3 0.2" stroke="#999" fill="none" stroke-width="0.6"/></svg><svg style="left:41.20px;top:32.80px" width="5.5" height="6.4" viewBox="0 0 5.5 6.4"><path d="M2.75 6.4V0.8M0.6 2.9L2.75 0.7L4.9 2.9" stroke="#555" fill="none" stroke-width="0.9"/></svg><div class="r" style="left:50.00px;top:29.30px;width:290.50px;height:13.20px;background:#fff;border:0.6px solid #e2e2e2"></div><div class="r" style="left:52.20px;top:32.40px;width:6.00px;height:7.20px;background:#f1d577;border-radius:0.4px"></div><div class="r" style="left:52.80px;top:33.60px;width:4.80px;height:5.40px;background:#fbe7a2;"></div><div class="r" style="left:340.00px;top:29.30px;width:14.50px;height:13.20px;background:#fff;border:0.6px solid #e2e2e2"></div><svg style="left:331.00px;top:35.00px" width="5" height="3" viewBox="0 0 5 3"><path d="M0.2 0.2L2.5 2.5L4.8 0.2" stroke="#666" fill="none" stroke-width="0.8"/></svg><svg style="left:345.20px;top:33.50px" width="5" height="5" viewBox="0 0 5 5"><path d="M4.3 2.2A1.9 1.9 0 1 1 2.6 0.6" stroke="#666" fill="none" stroke-width="0.8"/><path d="M2.1 -0.5L3.4 0.6L2.1 1.7" stroke="#666" fill="none" stroke-width="0.6"/></svg><div class="r" style="left:361.00px;top:29.30px;width:159.50px;height:13.40px;background:#fff;border:0.6px solid #e2e2e2"></div><svg style="left:367.70px;top:33.00px" width="6" height="6" viewBox="0 0 6 6"><circle cx="3.6" cy="2.4" r="1.9" stroke="#888" fill="none" stroke-width="0.6"/><path d="M2.3 3.8L0.3 5.8" stroke="#888" stroke-width="0.7"/></svg><div class="t" style="left:379.70px;top:32.92px;font-size:5.60px;color:#777;transform:scaleX(1.0656);">minecraftWorlds</div><div class="t" style="left:423.00px;top:33.35px;font-size:5.50px;color:#888;transform:scaleX(0.9347);">KENS</div><svg style="left:61.00px;top:34.60px" width="3.6" height="2.4" viewBox="0 0 3.6 2.4"><path d="M0 0H1.2V2.2H0ZM2.2 0H3.4V2.2H2.2Z" fill="#666"/></svg><div class="t" style="left:68.00px;top:32.92px;font-size:5.60px;color:#333;transform:scaleX(0.9447);">LocalState</div><svg style="left:98.60px;top:34.60px" width="2" height="3" viewBox="0 0 2 3"><path d="M0.2 0.2L1.6 1.5L0.2 2.8" stroke="#777" fill="none" stroke-width="0.5"/></svg><div class="t" style="left:104.00px;top:32.92px;font-size:5.60px;color:#333;transform:scaleX(0.9519);">games</div><svg style="left:125.20px;top:34.60px" width="2" height="3" viewBox="0 0 2 3"><path d="M0.2 0.2L1.6 1.5L0.2 2.8" stroke="#777" fill="none" stroke-width="0.5"/></svg><div class="t" style="left:131.00px;top:32.92px;font-size:5.60px;color:#333;transform:scaleX(1.0065);">com.mojang</div><svg style="left:166.50px;top:34.60px" width="2" height="3" viewBox="0 0 2 3"><path d="M0.2 0.2L1.6 1.5L0.2 2.8" stroke="#777" fill="none" stroke-width="0.5"/></svg><div class="t" style="left:173.00px;top:32.92px;font-size:5.60px;color:#333;transform:scaleX(1.0086);">minecraftWorlds</div><div class="r" style="left:0.00px;top:221.70px;width:65.00px;height:11.80px;background:#dadada;"></div><div class="abs" style="left:0;top:44px;width:65px;height:243px;overflow:hidden"><div class="r" style="left:15.00px;top:5.00px;width:7.30px;height:5.80px;background:#1f95ea;border:0.5px solid #57b5f0;border-radius:0.4px"></div><div class="t" style="left:25.30px;top:5.55px;font-size:5.50px;color:#2a2a2a;font-weight:bold;transform:scaleX(0.9061);">DESKTOP</div><svg style="left:59.20px;top:5.70px" width="5" height="5" viewBox="0 0 5 5"><path d="M0.3 4.7L2.1 2.9" stroke="#666" stroke-width="0.8"/><path d="M1.3 2.3L3 0.6L4.4 2L2.7 3.7Z" fill="#6a6a6a"/></svg><svg style="left:15.00px;top:15.40px" width="8" height="8" viewBox="0 0 8 8"><path d="M4 0.3V5.5" stroke="#3a82d0" stroke-width="1.8"/><path d="M0.6 3.8L4 7.6L7.4 3.8Z" fill="#3a82d0"/></svg><div class="t" style="left:25.30px;top:16.75px;font-size:5.50px;color:#2a2a2a;font-weight:bold;transform:scaleX(0.7274);">DOWNLOAD</div><svg style="left:59.20px;top:16.90px" width="5" height="5" viewBox="0 0 5 5"><path d="M0.3 4.7L2.1 2.9" stroke="#666" stroke-width="0.8"/><path d="M1.3 2.3L3 0.6L4.4 2L2.7 3.7Z" fill="#6a6a6a"/></svg><div class="r" style="left:15.80px;top:27.10px;width:5.60px;height:7.20px;background:#e3ebf2;border:0.6px solid #9fb0c0"></div><div class="r" style="left:17.00px;top:29.10px;width:3.00px;height:0.60px;background:#8aa;"></div><div class="r" style="left:17.00px;top:30.70px;width:3.00px;height:0.60px;background:#8aa;"></div><div class="t" style="left:25.30px;top:27.95px;font-size:5.50px;color:#2a2a2a;font-weight:bold;transform:scaleX(0.7238);">DOCUMENT</div><svg style="left:59.20px;top:28.10px" width="5" height="5" viewBox="0 0 5 5"><path d="M0.3 4.7L2.1 2.9" stroke="#666" stroke-width="0.8"/><path d="M1.3 2.3L3 0.6L4.4 2L2.7 3.7Z" fill="#6a6a6a"/></svg><div class="r" style="left:15.00px;top:39.40px;width:7.30px;height:5.40px;background:#dde8f0;border:0.6px solid #8fa4b4"></div><svg style="left:15.80px;top:41.40px" width="6" height="3" viewBox="0 0 6 3"><path d="M0 3L2 0.5L4 2.2L6 1V3Z" fill="#2a5a7a"/></svg><div class="t" style="left:25.30px;top:39.25px;font-size:5.50px;color:#2a2a2a;font-weight:bold;transform:scaleX(0.8011);">PICTUR</div><svg style="left:59.20px;top:39.40px" width="5" height="5" viewBox="0 0 5 5"><path d="M0.3 4.7L2.1 2.9" stroke="#666" stroke-width="0.8"/><path d="M1.3 2.3L3 0.6L4.4 2L2.7 3.7Z" fill="#6a6a6a"/></svg><div class="r" style="left:15.50px;top:49.40px;width:6.30px;height:7.40px;background:#3b4048;"></div><div class="r" style="left:16.60px;top:50.50px;width:4.10px;height:2.30px;background:#8d949c;"></div><div class="r" style="left:16.60px;top:53.60px;width:4.10px;height:2.30px;background:#6d747c;"></div><div class="t" style="left:25.30px;top:50.45px;font-size:5.50px;color:#2a2a2a;font-weight:bold;transform:scaleX(0.6778);">VIDEO</div><svg style="left:15.00px;top:60.30px" width="8" height="8.5" viewBox="0 0 8 8.5"><path d="M4.6 0.2V6.3" stroke="#1f8fe0" stroke-width="1"/><path d="M4.6 0.3C5.6 1.6 7.2 2 7.2 3.8" stroke="#1f8fe0" fill="none" stroke-width="1"/><ellipse cx="2.9" cy="6.5" rx="2.1" ry="1.5" fill="#1f8fe0"/></svg><div class="t" style="left:25.30px;top:61.65px;font-size:5.50px;color:#2a2a2a;font-weight:bold;transform:scaleX(0.9156);">MUSICKU</div><svg style="left:11.00px;top:76.40px" width="8" height="6" viewBox="0 0 8 6"><path d="M1.5 5.4H7.1C7.9 5.4 8.2 4.3 7.4 3.7C7.3 2.2 5.9 1.2 4.4 1.6C3.5 0.5 1.6 0.9 1.7 2.6C0.2 2.8 0.3 5.4 1.5 5.4Z" fill="#1e6fcb"/></svg><div class="t" style="left:21.40px;top:76.22px;font-size:5.60px;color:#222;transform:scaleX(0.9724);">OneDrive</div><div class="r" style="left:11.00px;top:90.90px;width:8.00px;height:5.50px;background:#7cc8f4;border:0.6px solid #3a86c8"></div><div class="r" style="left:11.50px;top:96.90px;width:7.00px;height:0.90px;background:#90a0ae;"></div><div class="t" style="left:21.40px;top:90.82px;font-size:5.60px;color:#222;transform:scaleX(0.8484);">PC</div><svg style="left:15.00px;top:101.80px" width="7.5" height="7.5" viewBox="0 0 7.5 7.5"><path d="M0.8 1.8L4 0.3L7 1.8V5.8L4 7.3L0.8 5.8Z" fill="#62d0f0"/><path d="M4 3.2L7 1.8V5.8L4 7.3Z" fill="#1b8fc6"/><path d="M0.8 1.8L4 3.2L7 1.8L4 0.3Z" fill="#a8e8fa"/></svg><div class="t" style="left:25.30px;top:102.95px;font-size:5.50px;color:#2a2a2a;font-weight:bold;transform:scaleX(0.9381);">3D OBJECTS</div><svg style="left:15.00px;top:112.90px" width="8" height="8" viewBox="0 0 8 8"><path d="M4 0.3V5.5" stroke="#3a82d0" stroke-width="1.8"/><path d="M0.6 3.8L4 7.6L7.4 3.8Z" fill="#3a82d0"/></svg><div class="t" style="left:25.30px;top:114.25px;font-size:5.50px;color:#2a2a2a;font-weight:bold;transform:scaleX(0.7274);">DOWNLOAD</div><div class="r" style="left:15.00px;top:124.90px;width:7.30px;height:5.80px;background:#1f95ea;border:0.5px solid #57b5f0;border-radius:0.4px"></div><div class="t" style="left:25.30px;top:125.45px;font-size:5.50px;color:#2a2a2a;font-weight:bold;transform:scaleX(0.9061);">DESKTOP</div><div class="r" style="left:15.80px;top:135.80px;width:5.60px;height:7.20px;background:#e3ebf2;border:0.6px solid #9fb0c0"></div><div class="r" style="left:17.00px;top:137.80px;width:3.00px;height:0.60px;background:#8aa;"></div><div class="r" style="left:17.00px;top:139.40px;width:3.00px;height:0.60px;background:#8aa;"></div><div class="t" style="left:25.30px;top:136.65px;font-size:5.50px;color:#2a2a2a;font-weight:bold;transform:scaleX(0.7238);">DOCUMENT</div><div class="r" style="left:15.00px;top:148.10px;width:7.30px;height:5.40px;background:#dde8f0;border:0.6px solid #8fa4b4"></div><svg style="left:15.80px;top:150.10px" width="6" height="3" viewBox="0 0 6 3"><path d="M0 3L2 0.5L4 2.2L6 1V3Z" fill="#2a5a7a"/></svg><div class="t" style="left:25.30px;top:147.95px;font-size:5.50px;color:#2a2a2a;font-weight:bold;transform:scaleX(0.8011);">PICTUR</div><div class="r" style="left:15.50px;top:158.10px;width:6.30px;height:7.40px;background:#3b4048;"></div><div class="r" style="left:16.60px;top:159.20px;width:4.10px;height:2.30px;background:#8d949c;"></div><div class="r" style="left:16.60px;top:162.30px;width:4.10px;height:2.30px;background:#6d747c;"></div><div class="t" style="left:25.30px;top:159.15px;font-size:5.50px;color:#2a2a2a;font-weight:bold;transform:scaleX(0.6778);">VIDEO</div><svg style="left:15.00px;top:169.10px" width="8" height="8.5" viewBox="0 0 8 8.5"><path d="M4.6 0.2V6.3" stroke="#1f8fe0" stroke-width="1"/><path d="M4.6 0.3C5.6 1.6 7.2 2 7.2 3.8" stroke="#1f8fe0" fill="none" stroke-width="1"/><ellipse cx="2.9" cy="6.5" rx="2.1" ry="1.5" fill="#1f8fe0"/></svg><div class="t" style="left:25.30px;top:170.45px;font-size:5.50px;color:#2a2a2a;font-weight:bold;transform:scaleX(0.9156);">MUSICKU</div><div class="r" style="left:15.00px;top:185.30px;width:7.30px;height:2.20px;background:#3c4650;"></div><div class="r" style="left:15.40px;top:181.50px;width:4.20px;height:3.20px;background:#b8dcd0;"></div><div class="t" style="left:25.30px;top:181.32px;font-size:5.60px;color:#222;transform:scaleX(0.9672);">Windows (C:)</div><div class="r" style="left:15.00px;top:192.70px;width:8.20px;height:6.40px;background:#eaf0f6;border:0.6px solid #7a9ab8"></div><div class="r" style="left:17.60px;top:194.20px;width:2.60px;height:3.40px;background:#2a4a7a;"></div><div class="t" style="left:25.30px;top:192.95px;font-size:5.50px;color:#2a2a2a;font-weight:bold;transform:scaleX(0.7404);">SOURCENEXT FUDE</div><div class="r" style="left:11.00px;top:208.20px;width:8.20px;height:6.40px;background:#eaf0f6;border:0.6px solid #7a9ab8"></div><div class="r" style="left:13.60px;top:209.70px;width:2.60px;height:3.40px;background:#2a4a7a;"></div><div class="t" style="left:21.40px;top:208.45px;font-size:5.50px;color:#2a2a2a;font-weight:bold;transform:scaleX(0.7791);">SOURCENEXT FUDE2</div><div class="r" style="left:15.00px;top:218.80px;width:6.50px;height:7.20px;background:#f1d577;border-radius:0.4px"></div><div class="r" style="left:15.60px;top:220.00px;width:5.30px;height:5.40px;background:#fbe7a2;"></div><div class="t" style="left:25.30px;top:219.22px;font-size:5.60px;color:#222;transform:scaleX(1.0160);">minecraftWorlds</div><svg style="left:11.00px;top:233.90px" width="8.5" height="7" viewBox="0 0 8.5 7"><path d="M0.6 4.2L5 1.2Q6 0.6 6.8 1.2L8 2.4Q8.4 3 7.6 3.6L3.4 6.4Q2.6 6.9 1.8 6.4L0.6 5.4Q0.2 4.8 0.6 4.2Z" fill="#3f9bd6"/><path d="M3.4 6.4L7.6 3.6Q8.4 3 8 2.4L8 3.4L3.6 6.8Z" fill="#1f6aa8"/></svg><div class="t" style="left:21.40px;top:234.75px;font-size:5.50px;color:#2a2a2a;font-weight:bold;transform:scaleX(0.8587);">NETWORK</div></div><div class="r" style="left:65.20px;top:46.00px;width:8.00px;height:240.00px;background:#f0f0f0;"></div><svg style="left:67.20px;top:49.70px" width="4" height="2.5" viewBox="0 0 4 2.5"><path d="M0.2 2.2L2 0.4L3.8 2.2" stroke="#555" fill="none" stroke-width="0.8"/></svg><div class="r" style="left:65.60px;top:66.80px;width:7.20px;height:207.00px;background:#c8c8c8;"></div><svg style="left:67.20px;top:280.20px" width="4" height="2.5" viewBox="0 0 4 2.5"><path d="M0.2 0.3L2 2.1L3.8 0.3" stroke="#555" fill="none" stroke-width="0.8"/></svg><div class="t" style="left:83.00px;top:49.75px;font-size:5.50px;color:#777;transform:scaleX(0.6733);">NAME</div><svg style="left:139.80px;top:46.30px" width="3" height="2" viewBox="0 0 3 2"><path d="M0.2 1.7L1.5 0.3L2.8 1.7" stroke="#aaa" fill="none" stroke-width="0.5"/></svg><div class="r" style="left:201.70px;top:45.50px;width:0.60px;height:14.00px;background:#eaeaea;"></div><div class="r" style="left:269.70px;top:45.50px;width:0.60px;height:14.00px;background:#eaeaea;"></div><div class="r" style="left:325.70px;top:45.50px;width:0.60px;height:14.00px;background:#eaeaea;"></div><div class="r" style="left:363.70px;top:45.50px;width:0.60px;height:14.00px;background:#eaeaea;"></div><div class="t" style="left:205.70px;top:49.75px;font-size:5.50px;color:#777;transform:scaleX(0.8779);">KOUSHIN</div><div class="t" style="left:273.00px;top:49.75px;font-size:5.50px;color:#777;transform:scaleX(0.7657);">TYPE</div><div class="t" style="left:329.00px;top:49.75px;font-size:5.50px;color:#777;transform:scaleX(1.0634);">SIZE</div><div class="t" style="left:275.00px;top:66.15px;font-size:5.50px;color:#666;transform:scaleX(0.7603);">KONO FOLDER WA KARA</div><div class="t" style="left:6.00px;top:288.12px;font-size:5.60px;color:#555;">0</div><div class="t" style="left:10.50px;top:288.40px;font-size:5.80px;color:#555;transform:scaleX(0.7758);">KOMOKU</div><div class="r" style="left:503.40px;top:285.90px;width:10.90px;height:10.40px;background:#cde0ec;border:0.6px solid #b4d0e2"></div><svg style="left:505.00px;top:288.00px" width="8" height="6.5" viewBox="0 0 8 6.5"><path d="M0.3 0.6H1.6M2.6 0.6H7.4M0.3 2.8H1.6M2.6 2.8H7.4M0.3 5H1.6M2.6 5H7.4" stroke="#5a7890" stroke-width="0.7"/></svg><div class="r" style="left:516.30px;top:288.10px;width:6.70px;height:5.60px;background:#e4e8ec;border:0.6px solid #b0b4b8"></div><div class="r" style="left:517.20px;top:290.00px;width:4.00px;height:2.00px;background:#2a3340;"></div></div>
<div class="r" style="left:0.00px;top:487.20px;width:900.00px;height:18.80px;background:linear-gradient(90deg,#20303c,#223442 45%,#1f2f3f 80%,#1e2d3d);"></div>
<svg style="left:7.30px;top:493.30px" width="8" height="7.6" viewBox="0 0 8 7.6"><path d="M0 1.1L3.5 0.6V3.6H0ZM3.9 0.55L8 0V3.6H3.9ZM0 4H3.5V7L0 6.5ZM3.9 4H8V7.6L3.9 7Z" fill="#fff"/></svg>
<div class="r" style="left:22.70px;top:487.20px;width:161.00px;height:18.80px;background:#f3f3f4;"></div>
<svg style="left:28.20px;top:492.20px" width="8" height="9" viewBox="0 0 8 9"><circle cx="5" cy="3.4" r="2.6" stroke="#444" fill="none" stroke-width="0.9"/><path d="M3.2 5.2L0.6 7.8" stroke="#444" stroke-width="1"/></svg>
<div class="t" style="left:41.30px;top:493.61px;font-size:6.20px;color:#555;transform:scaleX(0.9241);">KENSAKU SURU NIWA KOKO NI</div>
<svg style="left:190.00px;top:491.80px" width="10" height="10" viewBox="0 0 10 10"><circle cx="5.1" cy="5.1" r="3.1" stroke="#d8d8d8" fill="none" stroke-width="1.25"/></svg>
<svg style="left:211.50px;top:492.50px" width="11" height="9" viewBox="0 0 11 9"><rect x="1.3" y="1.4" width="5.2" height="5.6" stroke="#d8d8d8" fill="none" stroke-width="1.1"/><path d="M8.6 1.8V7.2" stroke="#d8d8d8" stroke-width="1.1"/><circle cx="8.6" cy="1" r="0.5" fill="#d8d8d8"/></svg>
<svg style="left:235.00px;top:491.00px" width="12.4" height="12" viewBox="0 0 12.4 12"><defs><linearGradient id="eg" x1="0" y1="1" x2="1" y2="0"><stop offset="0" stop-color="#0a4fb0"/><stop offset="0.45" stop-color="#1a8ae0"/><stop offset="1" stop-color="#56d88a"/></linearGradient></defs><path d="M6.2 0.4C9.8 0.4 12.2 3.2 12 6C11.8 7.6 10 7.8 9.4 6.8C9.8 5 8.4 4 6.8 4.1C5.2 4.2 4.2 5.6 4.3 7.2C4.5 9.2 6 10.4 8 10.6C6.4 11.6 4 11.8 2.4 10.4C0.8 9 0.2 7.4 0.4 5.6C0.8 2.6 3.2 0.4 6.2 0.4Z" fill="url(#eg)"/></svg>
<div class="r" style="left:253.30px;top:487.20px;width:22.50px;height:18.80px;background:#3e4b58;"></div>
<div class="r" style="left:253.30px;top:505.00px;width:22.50px;height:1.00px;background:#6cc06a;"></div>
<div class="r" style="left:259.50px;top:493.00px;width:10.50px;height:8.20px;background:#f4cf57;"></div><div class="r" style="left:259.50px;top:496.00px;width:10.50px;height:1.80px;background:#3f88d8;"></div><div class="r" style="left:259.50px;top:492.00px;width:4.50px;height:1.50px;background:#e0b443;"></div><div class="r" style="left:263.00px;top:498.50px;width:3.50px;height:2.00px;background:#4a7bb0;"></div>
<div class="r" style="left:281.00px;top:494.00px;width:12.20px;height:8.60px;background:#f7f7f7;border-radius:0.6px"></div><div class="r" style="left:284.20px;top:491.30px;width:5.80px;height:3.40px;background:transparent;border:0.8px solid #f7f7f7;border-bottom:none;border-radius:2.5px 2.5px 0 0"></div><div class="r" style="left:284.00px;top:496.20px;width:2.60px;height:2.40px;background:#f25022;"></div><div class="r" style="left:287.00px;top:496.20px;width:2.60px;height:2.40px;background:#7fba00;"></div><div class="r" style="left:284.00px;top:499.00px;width:2.60px;height:2.40px;background:#00a4ef;"></div><div class="r" style="left:287.00px;top:499.00px;width:2.60px;height:2.40px;background:#ffb900;"></div>
<div class="r" style="left:304.20px;top:494.20px;width:12.50px;height:8.30px;background:linear-gradient(180deg,#39a0e8,#1f78c8);border-radius:0.6px"></div><svg style="left:304.20px;top:494.20px" width="12.5" height="6" viewBox="0 0 12.5 6"><path d="M0.3 0.3L6.25 4.5L12.2 0.3" stroke="#c8e6fa" fill="none" stroke-width="0.9"/></svg>
<svg style="left:778.70px;top:495.60px" width="5.5" height="3.4" viewBox="0 0 5.5 3.4"><path d="M0.3 3L2.75 0.5L5.2 3" stroke="#ddd" fill="none" stroke-width="0.8"/></svg>
<svg style="left:788.80px;top:494.00px" width="8" height="5" viewBox="0 0 8 5"><path d="M1 4.6H7C7.8 4.6 8 3.5 7.2 3C7 1.6 5.6 0.8 4.2 1.2C3.3 0.3 1.6 0.6 1.7 2C0.2 2.3 0.3 4.6 1 4.6Z" fill="#eee"/></svg>
<div class="r" style="left:799.70px;top:494.30px;width:7.80px;height:4.80px;background:#e0e0e0;"></div><div class="r" style="left:800.60px;top:495.20px;width:6.00px;height:3.00px;background:#b8c0c8;"></div>
<svg style="left:812.00px;top:493.40px" width="6.5" height="6.6" viewBox="0 0 6.5 6.6"><path d="M0.5 6.2L6.2 0.5M2.8 6.2A3.4 3.4 0 0 1 6.2 2.8M4.6 6.2A1.6 1.6 0 0 1 6.2 4.6" stroke="#ccc" fill="none" stroke-width="0.7"/></svg>
<svg style="left:822.00px;top:493.50px" width="7.2" height="6.6" viewBox="0 0 7.2 6.6"><path d="M0.3 2.2H1.8L3.8 0.5V6.1L1.8 4.4H0.3Z" fill="none" stroke="#ddd" stroke-width="0.7"/><path d="M5 1.8C5.8 2.6 5.8 3.9 5 4.7M6.1 1C7.3 2.2 7.3 4.3 6.1 5.5" stroke="#ddd" fill="none" stroke-width="0.6"/></svg>
<div class="t" style="left:833.90px;top:492.96px;font-size:8.00px;color:#eee;transform:scaleX(1.1431);">A</div>
<div class="t" style="left:852.70px;top:490.01px;font-size:5.40px;color:#e8e8e8;transform:scaleX(0.9151);">11:37</div>
<div class="t" style="left:845.00px;top:498.51px;font-size:5.40px;color:#e8e8e8;transform:scaleX(1.0175);">2020/07/19</div>
<svg style="left:880.70px;top:493.00px" width="11" height="11" viewBox="0 0 11 11"><path d="M0.4 0.4H7.3V5.8H2.6L1.1 7.2V5.8H0.4Z" fill="none" stroke="#eee" stroke-width="0.8"/><path d="M1.8 2H5.9M1.8 3.6H5.9" stroke="#ccc" stroke-width="0.5"/><circle cx="7.6" cy="7.4" r="3.4" fill="#1e2d3b" stroke="#aaa" stroke-width="0.5"/></svg>
<div class="t" style="left:887.20px;top:498.58px;font-size:4.20px;color:#fff;transform:scaleX(0.8990);">4</div>
<div class="r" style="left:897.30px;top:487.20px;width:0.70px;height:18.80px;background:#5a6672;"></div>
</div></body></html>
